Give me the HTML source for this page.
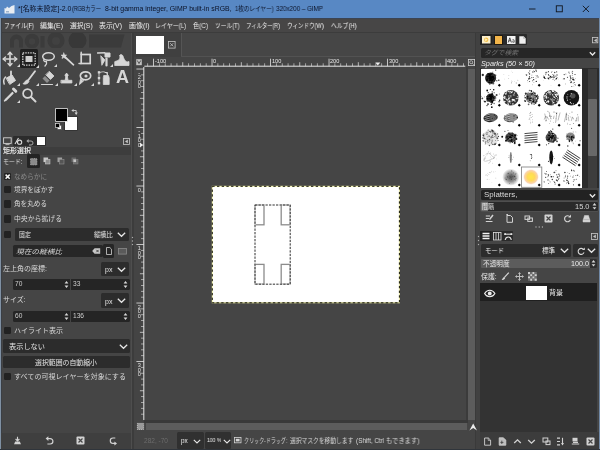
<!DOCTYPE html>
<html lang="ja"><head><meta charset="utf-8"><title>GIMP</title><style>
html,body{margin:0;padding:0;}
body{width:600px;height:450px;overflow:hidden;background:#454545;position:relative;
font-family:"Liberation Sans","Noto Sans CJK JP",sans-serif;font-size:7px;color:#e0e0e0;line-height:1;}
.a{position:absolute;}
.t{position:absolute;white-space:nowrap;will-change:transform;}
svg{overflow:visible;}
</style></head><body>
<div class="a" style="left:0px;top:0px;width:600px;height:17.5px;background:#5888c4;"></div>
<svg class="a" style="left:4px;top:4px;" width="11" height="10" viewBox="0 0 11 10"><path d="M0.5 9.5 L0.5 4 L2 4.5 L3 2.5 L5 4 L7.5 2 L10.5 1 L10.5 9.5 Z" fill="#e8edf3"></path><path d="M2 7 h3 v1.5 h-3z" fill="#9fb3cc"></path></svg>
<div class="t" style="left: 17.6px; top: 5.5px; font-size: 6.6px; line-height: 6.6px; color: rgb(11, 18, 38); transform-origin: 0px 50%; transform: scaleX(1.056);">*[名称未設定]-2.0</div>
<div class="t" style="left: 72.4px; top: 5.5px; font-size: 6.6px; line-height: 6.6px; color: rgb(11, 18, 38); transform-origin: 0px 50%; transform: scaleX(0.8);">(RGBカラー</div>
<div class="t" style="left: 105px; top: 5.5px; font-size: 6.6px; line-height: 6.6px; color: rgb(11, 18, 38); transform-origin: 0px 50%; transform: scaleX(1.045);">8-bit gamma integer, GIMP built-in sRGB,</div>
<div class="t" style="left: 235px; top: 5.5px; font-size: 6.6px; line-height: 6.6px; color: rgb(11, 18, 38); transform-origin: 0px 50%; transform: scaleX(0.853);">1枚のレイヤー)</div>
<div class="t" style="left: 276px; top: 5.5px; font-size: 6.6px; line-height: 6.6px; color: rgb(11, 18, 38); transform-origin: 0px 50%; transform: scaleX(0.95);">320x200 – GIMP</div>
<svg class="a" style="left:520px;top:0px;" width="80" height="17.5" viewBox="0 0 80 17.5"><path d="M9 9 h6.5" stroke="#10141c" stroke-width="0.9" fill="none"></path><rect x="36.3" y="5.8" width="6" height="6" stroke="#10141c" stroke-width="0.9" fill="none"></rect><path d="M62.8 5.8 l6.2 6.2 M69 5.8 l-6.2 6.2" stroke="#10141c" stroke-width="0.9" fill="none"></path></svg>
<div class="a" style="left:0px;top:17.5px;width:600px;height:15px;background:#474646;"></div>
<div class="a" style="left:0px;top:17.5px;width:600px;height:1.5px;background:#3b4454;"></div>
<div class="a" style="left:0px;top:31.8px;width:600px;height:1.2px;background:#3c3c3c;"></div>
<div class="t" style="left: 4px; top: 22.9px; font-size: 6.8px; line-height: 6.8px; color: rgb(236, 236, 236); transform-origin: 0px 50%; transform: scaleX(0.836);">ファイル(F)</div>
<div class="t" style="left: 40px; top: 22.9px; font-size: 6.8px; line-height: 6.8px; color: rgb(236, 236, 236); transform-origin: 0px 50%; transform: scaleX(1.015);">編集(E)</div>
<div class="t" style="left: 70px; top: 22.9px; font-size: 6.8px; line-height: 6.8px; color: rgb(236, 236, 236); transform-origin: 0px 50%; transform: scaleX(0.993);">選択(S)</div>
<div class="t" style="left: 99px; top: 22.9px; font-size: 6.8px; line-height: 6.8px; color: rgb(236, 236, 236); transform-origin: 0px 50%; transform: scaleX(1.015);">表示(V)</div>
<div class="t" style="left: 129px; top: 22.9px; font-size: 6.8px; line-height: 6.8px; color: rgb(236, 236, 236); transform-origin: 0px 50%; transform: scaleX(1.024);">画像(I)</div>
<div class="t" style="left: 155px; top: 22.9px; font-size: 6.8px; line-height: 6.8px; color: rgb(236, 236, 236); transform-origin: 0px 50%; transform: scaleX(0.878);">レイヤー(L)</div>
<div class="t" style="left: 192.5px; top: 22.9px; font-size: 6.8px; line-height: 6.8px; color: rgb(236, 236, 236); transform-origin: 0px 50%; transform: scaleX(0.924);">色(C)</div>
<div class="t" style="left: 215px; top: 22.9px; font-size: 6.8px; line-height: 6.8px; color: rgb(236, 236, 236); transform-origin: 0px 50%; transform: scaleX(0.843);">ツール(T)</div>
<div class="t" style="left: 245.5px; top: 22.9px; font-size: 6.8px; line-height: 6.8px; color: rgb(236, 236, 236); transform-origin: 0px 50%; transform: scaleX(0.785);">フィルター(R)</div>
<div class="t" style="left: 286.5px; top: 22.9px; font-size: 6.8px; line-height: 6.8px; color: rgb(236, 236, 236); transform-origin: 0px 50%; transform: scaleX(0.812);">ウィンドウ(W)</div>
<div class="t" style="left: 330.5px; top: 22.9px; font-size: 6.8px; line-height: 6.8px; color: rgb(236, 236, 236); transform-origin: 0px 50%; transform: scaleX(0.855);">ヘルプ(H)</div>
<div class="a" style="left:0px;top:17.5px;width:1.1px;height:432.5px;background:#7f90a3;"></div>
<div class="a" style="left:1.1px;top:17.5px;width:0.7px;height:432.5px;background:#3a3e44;"></div>
<div class="a" style="left:1px;top:432.7px;width:129.5px;height:16px;background:#3f3f3f;"></div>
<svg class="a" style="left:0px;top:33px;clip-path:inset(0 0 0 0);" width="131" height="15" viewBox="0 0 131 15"><g fill="#3b3b3b"><path d="M10 14.5 V8 a6.5 6.5 0 0 1 13 0 V14.5 H19 V8.5 a2.5 2.5 0 0 0 -5 0 V14.5Z"></path><circle cx="32" cy="8" r="7.3"></circle><rect x="40.5" y="3" width="4" height="11.5"></rect><circle cx="56" cy="7.5" r="8.6"></circle><circle cx="77.5" cy="7.5" r="9" fill="#383838"></circle><path d="M89 1.5 H124.5 L121 14.5 H89Z"></path></g><g fill="#414141"><circle cx="32" cy="8.5" r="3.2"></circle><circle cx="56" cy="8" r="4"></circle></g></svg>
<div class="a" style="left:19.5px;top:49px;width:18px;height:18.5px;background:#1f1f1f;border-radius:1.5px;"></div>
<svg class="a" style="left:2px;top:51px;" width="16" height="16" viewBox="0 0 16 16"><g fill="none" stroke="#d6d6d6" stroke-width="1.2" stroke-linecap="round" stroke-linejoin="round"><path d="M8 1.5 V14.5 M1.5 8 H14.5" stroke-width="1.6"></path><path d="M6 3.5 L8 1.2 L10 3.5 M6 12.5 L8 14.8 L10 12.5 M3.5 6 L1.2 8 L3.5 10 M12.5 6 L14.8 8 L12.5 10" stroke-width="1.4"></path></g></svg>
<svg class="a" style="left:17px;top:64px;" width="3" height="3" viewBox="0 0 3 3"><path d="M3 0 V3 H0Z" fill="#d6d6d6"></path></svg>
<svg class="a" style="left:20.5px;top:51px;" width="16" height="16" viewBox="0 0 16 16"><g fill="none" stroke="#d6d6d6" stroke-width="1.2" stroke-linecap="round" stroke-linejoin="round"><rect x="1.8" y="1.8" width="12.4" height="12.4" stroke-dasharray="1.4 1.1" stroke-linecap="butt" stroke-width="1.3"></rect><rect x="4.5" y="5" width="7" height="6" fill="#cfcfcf" stroke="none"></rect></g></svg>
<svg class="a" style="left:35.5px;top:65px;" width="3" height="3" viewBox="0 0 3 3"><path d="M3 0 V3 H0Z" fill="#d6d6d6"></path></svg>
<svg class="a" style="left:39.5px;top:51px;" width="16" height="16" viewBox="0 0 16 16"><g fill="none" stroke="#d6d6d6" stroke-width="1.2" stroke-linecap="round" stroke-linejoin="round"><ellipse cx="8.5" cy="5.5" rx="5.8" ry="3.8" stroke-width="1.5"></ellipse><path d="M4 8 C3 10 5 11 6.5 10.5 C7 12 6 14 5 15" stroke-width="1.3"></path></g></svg>
<svg class="a" style="left:53.5px;top:64px;" width="3" height="3" viewBox="0 0 3 3"><path d="M3 0 V3 H0Z" fill="#d6d6d6"></path></svg>
<svg class="a" style="left:58.5px;top:51px;" width="16" height="16" viewBox="0 0 16 16"><g fill="none" stroke="#d6d6d6" stroke-width="1.2" stroke-linecap="round" stroke-linejoin="round"><path d="M6 6 L14.5 13.8" stroke-width="1.7"></path><path d="M4.8 2 L5.6 3.9 L7.6 4.1 L6.1 5.5 L6.6 7.5 L4.8 6.5 L3 7.5 L3.5 5.5 L2.1 4.1 L4.1 3.9Z" fill="#d6d6d6" stroke-width="0.6"></path></g></svg>
<svg class="a" style="left:77px;top:51px;" width="16" height="16" viewBox="0 0 16 16"><g fill="none" stroke="#d6d6d6" stroke-width="1.2" stroke-linecap="round" stroke-linejoin="round"><rect x="4.2" y="3.5" width="9" height="9" stroke-width="1.7" stroke-linejoin="miter"></rect><path d="M4.2 1.2 V3.5 M2 12.5 H4.2" stroke-width="1.5"></path></g></svg>
<svg class="a" style="left:95.5px;top:51px;" width="16" height="16" viewBox="0 0 16 16"><g fill="none" stroke="#d6d6d6" stroke-width="1.2" stroke-linecap="round" stroke-linejoin="round"><path d="M1.5 2 H14 V6 H9 V2Z" fill="#d6d6d6" stroke-width="1"></path><path d="M5 5 L9 9 L6 14 Z" fill="#d6d6d6" stroke-width="0.8"></path><path d="M10.5 7.5 V14.5" stroke-width="2.2"></path></g></svg>
<svg class="a" style="left:109.5px;top:64px;" width="3" height="3" viewBox="0 0 3 3"><path d="M3 0 V3 H0Z" fill="#d6d6d6"></path></svg>
<svg class="a" style="left:114px;top:51px;" width="16" height="16" viewBox="0 0 16 16"><g fill="none" stroke="#d6d6d6" stroke-width="1.2" stroke-linecap="round" stroke-linejoin="round"><path d="M1 14.5 H15 V10.5 C12 12 10.5 9 9.5 6.5 C9 4 7 2.5 5.5 4.5 C6.5 6 6 8.5 4 9.5 C3 10 2 10 1 10.5Z" fill="#d6d6d6" stroke-width="0.8"></path></g></svg>
<svg class="a" style="left:2px;top:69.5px;" width="16" height="16" viewBox="0 0 16 16"><g fill="none" stroke="#d6d6d6" stroke-width="1.2" stroke-linecap="round" stroke-linejoin="round"><path d="M4.5 8 L10 5 L13.5 10.5 L8 14.2Z" fill="#d6d6d6" stroke-width="1"></path><path d="M9 1.5 V8" stroke-width="1.8"></path><path d="M3.5 7 C1.5 9 1.5 12 2.2 14" stroke-width="1.5"></path></g></svg>
<svg class="a" style="left:17px;top:82.5px;" width="3" height="3" viewBox="0 0 3 3"><path d="M3 0 V3 H0Z" fill="#d6d6d6"></path></svg>
<svg class="a" style="left:20.5px;top:69.5px;" width="16" height="16" viewBox="0 0 16 16"><g fill="none" stroke="#d6d6d6" stroke-width="1.2" stroke-linecap="round" stroke-linejoin="round"><path d="M14 1.2 L7 10.5" stroke-width="1.9"></path><path d="M6.5 10 C4.5 10 4 12 2 13.8 C4.5 14.8 7.5 13.5 8 11.5Z" fill="#d6d6d6" stroke-width="0.8"></path></g></svg>
<svg class="a" style="left:35.5px;top:82.5px;" width="3" height="3" viewBox="0 0 3 3"><path d="M3 0 V3 H0Z" fill="#d6d6d6"></path></svg>
<svg class="a" style="left:39.5px;top:69.5px;" width="16" height="16" viewBox="0 0 16 16"><g fill="none" stroke="#d6d6d6" stroke-width="1.2" stroke-linecap="round" stroke-linejoin="round"><path d="M9.5 1.5 L14 6 L10.5 9.5 L6 5Z" fill="#d6d6d6" stroke-width="0.8"></path><path d="M5 6 L9.5 10.5 L7 13 L2.5 8.5Z" fill="#8d8d8d" stroke="none"></path><path d="M1.5 14.5 H12.5" stroke-width="1.2"></path></g></svg>
<svg class="a" style="left:54.5px;top:82.5px;" width="3" height="3" viewBox="0 0 3 3"><path d="M3 0 V3 H0Z" fill="#d6d6d6"></path></svg>
<svg class="a" style="left:58.5px;top:69.5px;" width="16" height="16" viewBox="0 0 16 16"><g fill="none" stroke="#d6d6d6" stroke-width="1.2" stroke-linecap="round" stroke-linejoin="round"><path d="M7.6 3.6 a1.6 1.6 0 1 1 -0.01 0Z M6.8 6.6 L6.2 10 H9 L8.4 6.6Z M2.3 10.3 H12.9 V13 H2.3Z" fill="#d6d6d6" stroke-width="0.8"></path></g></svg>
<svg class="a" style="left:73.5px;top:82.5px;" width="3" height="3" viewBox="0 0 3 3"><path d="M3 0 V3 H0Z" fill="#d6d6d6"></path></svg>
<svg class="a" style="left:77px;top:69.5px;" width="16" height="16" viewBox="0 0 16 16"><g fill="none" stroke="#d6d6d6" stroke-width="1.2" stroke-linecap="round" stroke-linejoin="round"><ellipse cx="8.5" cy="5.8" rx="5.2" ry="4" stroke-width="1.7"></ellipse><path d="M3.5 9 L2.5 14.5 L6.5 11Z" fill="#d6d6d6" stroke-width="0.9"></path><circle cx="9" cy="6" r="1.6" fill="#d6d6d6" stroke="none"></circle></g></svg>
<svg class="a" style="left:91px;top:82.5px;" width="3" height="3" viewBox="0 0 3 3"><path d="M3 0 V3 H0Z" fill="#d6d6d6"></path></svg>
<svg class="a" style="left:95.5px;top:69.5px;" width="16" height="16" viewBox="0 0 16 16"><g fill="none" stroke="#d6d6d6" stroke-width="1.2" stroke-linecap="round" stroke-linejoin="round"><path d="M3 2 V14" stroke-width="0.9" stroke-dasharray="1.2 1.2"></path><rect x="1.8" y="1.2" width="2.4" height="2.4" fill="#d6d6d6" stroke="none"></rect><rect x="1.8" y="6.8" width="2.4" height="2.4" fill="#d6d6d6" stroke="none"></rect><rect x="1.8" y="12" width="2.4" height="2.4" fill="#d6d6d6" stroke="none"></rect><path d="M4.2 2.4 C7 1.2 9.5 1.6 10.3 3.2" stroke-width="0.8"></path><path d="M8 5.5 H12.5 L13.2 8 V14.5 H7.3 V8Z" fill="#d6d6d6" stroke-width="0.8"></path><path d="M9.2 2.5 H11.3 V5" stroke-width="1.2"></path></g></svg>
<div class="t" style="left:115.5px;top:68.0px;font-size:18px;line-height:18px;font-weight:bold;color:#d6d6d6;">A</div>
<svg class="a" style="left:2px;top:87px;" width="16" height="16" viewBox="0 0 16 16"><g fill="none" stroke="#d6d6d6" stroke-width="1.2" stroke-linecap="round" stroke-linejoin="round"><path d="M11.5 2 L13.8 4.3" stroke-width="3"></path><path d="M10.5 5.5 L4 12 L2.5 14 L4.5 12.8 L11 6.2" stroke-width="1.4"></path></g></svg>
<svg class="a" style="left:17px;top:100px;" width="3" height="3" viewBox="0 0 3 3"><path d="M3 0 V3 H0Z" fill="#d6d6d6"></path></svg>
<svg class="a" style="left:20.5px;top:87px;" width="16" height="16" viewBox="0 0 16 16"><g fill="none" stroke="#d6d6d6" stroke-width="1.2" stroke-linecap="round" stroke-linejoin="round"><circle cx="6.5" cy="6.5" r="4.4" stroke-width="1.7"></circle><path d="M10 10 L14.5 14.5" stroke-width="2"></path></g></svg>
<div class="a" style="left:64.5px;top:117px;width:12.5px;height:12.5px;background:#ffffff;box-shadow:0 0 0 0.6px #2a2a2a;"></div>
<div class="a" style="left:55.6px;top:108.6px;width:11.8px;height:12.1px;background:#000000;box-shadow:0 0 0 0.8px #dcdcdc;"></div>
<svg class="a" style="left:54.5px;top:123px;" width="7" height="7" viewBox="0 0 7 7"><rect x="2.2" y="2.2" width="4.3" height="4.3" fill="#fff" stroke="#222" stroke-width="0.5"></rect><rect x="0.4" y="0.4" width="4.2" height="4.2" fill="#000" stroke="#ddd" stroke-width="0.7"></rect></svg>
<svg class="a" style="left:70.5px;top:108.5px;" width="7" height="6" viewBox="0 0 7 6"><path d="M1 1.5 H5.2 V5.2" fill="none" stroke="#d0d0d0" stroke-width="0.9"></path><path d="M2.6 0 L0.3 1.5 L2.6 3Z M3.6 3.6 L5.2 6 L6.8 3.6Z" fill="#d0d0d0"></path></svg>
<div class="a" style="left:12.7px;top:135.7px;width:33.3px;height:10px;background:#2c2c2c;border-radius:1px;"></div>
<svg class="a" style="left:3px;top:137px;" width="9" height="8" viewBox="0 0 9 8"><rect x="0.6" y="0.8" width="7.6" height="5.6" fill="none" stroke="#d4d4d4" stroke-width="0.9"></rect><path d="M2.5 7.6 H6.5" stroke="#d4d4d4" stroke-width="0.8"></path></svg>
<svg class="a" style="left:14px;top:137px;" width="9" height="8" viewBox="0 0 9 8"><path d="M1 7 L4.5 1" stroke="#dadada" stroke-width="1.1"></path><circle cx="5.6" cy="5.2" r="2.1" fill="none" stroke="#dadada" stroke-width="1.1"></circle></svg>
<svg class="a" style="left:26px;top:137.5px;" width="8" height="7" viewBox="0 0 8 7"><path d="M1.5 3 H5 a2 2 0 0 1 0 4 H3" fill="none" stroke="#a8a8a8" stroke-width="1"></path><path d="M2.6 1 L0.4 3 L2.6 5Z" fill="#a8a8a8"></path></svg>
<div class="a" style="left:36.6px;top:136.8px;width:8.4px;height:8.5px;background:#ffffff;"></div>
<svg class="a" style="left:123px;top:137.5px;" width="7" height="7" viewBox="0 0 7 7"><rect x="0.4" y="0.4" width="6" height="6" fill="none" stroke="#c8c8c8" stroke-width="0.8"></rect><path d="M4.8 1.6 L2 3.4 L4.8 5.2Z" fill="#c8c8c8"></path></svg>
<div class="a" style="left:1px;top:146.5px;width:130px;height:0.8px;background:#525252;"></div>
<div class="a" style="left:1px;top:147.3px;width:130px;height:7.5px;background:#3d3d3d;"></div>
<div class="t" style="left: 3px; top: 147.3px; font-size: 7px; line-height: 7px; color: rgb(230, 230, 230); font-weight: bold; transform-origin: 0px 50%; transform: scaleX(1);">矩形選択</div>
<div class="t" style="left: 3px; top: 158.7px; font-size: 6.6px; line-height: 6.6px; color: rgb(218, 218, 218); transform-origin: 0px 50%; transform: scaleX(0.902);">モード:</div>
<div class="a" style="left:27px;top:154.2px;width:12.5px;height:13.8px;background:#232323;border-radius:1.5px;"></div>
<svg class="a" style="left:29.5px;top:157.5px;" width="7.5" height="7.5" viewBox="0 0 7.5 7.5"><rect x="0.6" y="0.6" width="6.3" height="6.3" fill="#8a8a8a" stroke="#bdbdbd" stroke-width="0.7" stroke-dasharray="1 0.7"></rect></svg>
<svg class="a" style="left:43px;top:157px;" width="7.5" height="7.5" viewBox="0 0 7.5 7.5"><rect x="0.5" y="0.5" width="4.6" height="4.6" fill="#c9c9c9"></rect><rect x="2.4" y="2.4" width="4.6" height="4.6" fill="#8d8d8d" stroke="#cfcfcf" stroke-width="0.5"></rect></svg>
<svg class="a" style="left:57px;top:157px;" width="7.5" height="7.5" viewBox="0 0 7.5 7.5"><rect x="0.5" y="0.5" width="4.6" height="4.6" fill="#a0a0a0"></rect><rect x="2.4" y="2.4" width="4.6" height="4.6" fill="#555" stroke="#9a9a9a" stroke-width="0.5"></rect></svg>
<svg class="a" style="left:70.5px;top:157px;" width="7.5" height="7.5" viewBox="0 0 7.5 7.5"><rect x="0.5" y="0.5" width="4.6" height="4.6" fill="#6a6a6a"></rect><rect x="2.4" y="2.4" width="4.6" height="4.6" fill="#666" stroke="#888" stroke-width="0.5"></rect><rect x="2.4" y="2.4" width="2.7" height="2.7" fill="#c4c4c4"></rect></svg>
<div class="a" style="left:3.8px;top:173px;width:7.3px;height:7.3px;background:#222222;border-radius:1.2px;"></div>
<svg class="a" style="left:3.8px;top:173px;" width="7.3" height="7.3" viewBox="0 0 7.3 7.3"><path d="M1.6 1.6 L5.7 5.7 M5.7 1.6 L1.6 5.7" stroke="#f2f2f2" stroke-width="1.5" fill="none"></path></svg>
<div class="t" style="left: 14px; top: 173.9px; font-size: 6.6px; line-height: 6.6px; color: rgb(138, 138, 138); transform-origin: 0px 50%; transform: scaleX(1.001);">なめらかに</div>
<div class="a" style="left:3.8px;top:186px;width:7.3px;height:7.3px;background:#222222;border-radius:1.2px;"></div>
<div class="t" style="left: 14px; top: 187px; font-size: 6.6px; line-height: 6.6px; color: rgb(216, 216, 216); transform-origin: 0px 50%; transform: scaleX(1.011);">境界をぼかす</div>
<div class="a" style="left:3.8px;top:200.3px;width:7.3px;height:7.3px;background:#222222;border-radius:1.2px;"></div>
<div class="t" style="left: 14px; top: 201.1px; font-size: 6.6px; line-height: 6.6px; color: rgb(216, 216, 216); transform-origin: 0px 50%; transform: scaleX(1.001);">角を丸める</div>
<div class="a" style="left:3.8px;top:215.3px;width:7.3px;height:7.3px;background:#222222;border-radius:1.2px;"></div>
<div class="t" style="left: 14px; top: 215.9px; font-size: 6.6px; line-height: 6.6px; color: rgb(216, 216, 216); transform-origin: 0px 50%; transform: scaleX(1.04);">中央から拡げる</div>
<div class="a" style="left:3.8px;top:231px;width:7.3px;height:7.3px;background:#222222;border-radius:1.2px;"></div>
<div class="a" style="left:15px;top:227.5px;width:114.3px;height:13.5px;background:#2c2c2c;border-radius:1.5px;"></div>
<div class="t" style="left: 18.5px; top: 231.9px; font-size: 6.6px; line-height: 6.6px; color: rgb(230, 230, 230); transform-origin: 0px 50%; transform: scaleX(0.91);">固定</div>
<div class="t" style="left: 93.5px; top: 231.9px; font-size: 6.6px; line-height: 6.6px; color: rgb(230, 230, 230); transform-origin: 0px 50%; transform: scaleX(0.935);">縦横比</div>
<svg class="a" style="left:117px;top:232px;" width="9" height="5" viewBox="0 0 9 5"><path d="M0.8 0.8 L4.5 4.3 L8.2 0.8" fill="none" stroke="#e8e8e8" stroke-width="1.2"></path></svg>
<div class="a" style="left:13px;top:245.2px;width:89.5px;height:11.6px;background:#272727;border-radius:1.5px;"></div>
<div class="t" style="left: 16px; top: 248.6px; font-size: 6.6px; line-height: 6.6px; color: rgb(218, 218, 218); font-style: italic; transform-origin: 0px 50%; transform: scaleX(1.163);">現在の縦横比</div>
<svg class="a" style="left:92px;top:248px;" width="8.5" height="6" viewBox="0 0 8.5 6"><path d="M2.6 0.3 H8.2 V5.7 H2.6 L0.2 3Z" fill="#c8c8c8"></path><path d="M4.3 1.8 L6.7 4.2 M6.7 1.8 L4.3 4.2" stroke="#2c2c2c" stroke-width="0.8"></path></svg>
<div class="a" style="left:103px;top:244px;width:11px;height:14px;background:#262626;border-radius:1.5px;"></div>
<svg class="a" style="left:105.5px;top:247px;" width="6" height="8" viewBox="0 0 6 8"><path d="M0.5 0.5 H3.8 L5.5 2.2 V7.5 H0.5Z" fill="none" stroke="#d0d0d0" stroke-width="0.8"></path></svg>
<svg class="a" style="left:117.5px;top:247.5px;" width="9" height="7" viewBox="0 0 9 7"><rect x="0.5" y="0.5" width="8" height="5.6" fill="#5a5a5a" stroke="#8a8a8a" stroke-width="0.8"></rect></svg>
<div class="t" style="left: 2.5px; top: 265.6px; font-size: 6.6px; line-height: 6.6px; color: rgb(218, 218, 218); transform-origin: 0px 50%; transform: scaleX(1.063);">左上角の座標:</div>
<div class="a" style="left:100.7px;top:261.6px;width:28.8px;height:14.8px;background:#2c2c2c;border-radius:1.5px;"></div>
<div class="t" style="left:105px;top:265.80px;font-size:7px;line-height:7px;color:#e6e6e6;">px</div>
<svg class="a" style="left:116.8px;top:266.6px;" width="9" height="5" viewBox="0 0 9 5"><path d="M0.8 0.8 L4.5 4.3 L8.2 0.8" fill="none" stroke="#e8e8e8" stroke-width="1.2"></path></svg>
<div class="a" style="left:12.5px;top:278.7px;width:117px;height:11.3px;background:#252525;border-radius:1.5px;"></div>
<div class="a" style="left:70.3px;top:278.7px;width:0.8px;height:11.3px;background:#454545;"></div>
<div class="t" style="left:15px;top:281.40px;font-size:6.6px;line-height:6.6px;color:#cfcfcf;">70</div>
<div class="t" style="left:73px;top:281.40px;font-size:6.6px;line-height:6.6px;color:#cfcfcf;">33</div>
<svg class="a" style="left:63.5px;top:279.9px;" width="5" height="9" viewBox="0 0 5 9"><path d="M0.6 3.4 L2.5 1 L4.4 3.4Z M0.6 5.6 L2.5 8 L4.4 5.6Z" fill="#d8d8d8"></path></svg>
<svg class="a" style="left:123px;top:279.9px;" width="5" height="9" viewBox="0 0 5 9"><path d="M0.6 3.4 L2.5 1 L4.4 3.4Z M0.6 5.6 L2.5 8 L4.4 5.6Z" fill="#d8d8d8"></path></svg>
<div class="t" style="left: 2.5px; top: 296.8px; font-size: 6.6px; line-height: 6.6px; color: rgb(218, 218, 218); transform-origin: 0px 50%; transform: scaleX(1.05);">サイズ:</div>
<div class="a" style="left:100.7px;top:293.3px;width:28.8px;height:14.8px;background:#2c2c2c;border-radius:1.5px;"></div>
<div class="t" style="left:105px;top:297.50px;font-size:7px;line-height:7px;color:#e6e6e6;">px</div>
<svg class="a" style="left:116.8px;top:298.3px;" width="9" height="5" viewBox="0 0 9 5"><path d="M0.8 0.8 L4.5 4.3 L8.2 0.8" fill="none" stroke="#e8e8e8" stroke-width="1.2"></path></svg>
<div class="a" style="left:12.5px;top:310.5px;width:117px;height:11.3px;background:#252525;border-radius:1.5px;"></div>
<div class="a" style="left:70.3px;top:310.5px;width:0.8px;height:11.3px;background:#454545;"></div>
<div class="t" style="left:15px;top:313.20px;font-size:6.6px;line-height:6.6px;color:#cfcfcf;">60</div>
<div class="t" style="left:73px;top:313.20px;font-size:6.6px;line-height:6.6px;color:#cfcfcf;">136</div>
<svg class="a" style="left:63.5px;top:311.7px;" width="5" height="9" viewBox="0 0 5 9"><path d="M0.6 3.4 L2.5 1 L4.4 3.4Z M0.6 5.6 L2.5 8 L4.4 5.6Z" fill="#d8d8d8"></path></svg>
<svg class="a" style="left:123px;top:311.7px;" width="5" height="9" viewBox="0 0 5 9"><path d="M0.6 3.4 L2.5 1 L4.4 3.4Z M0.6 5.6 L2.5 8 L4.4 5.6Z" fill="#d8d8d8"></path></svg>
<div class="a" style="left:3.8px;top:327px;width:7.3px;height:7.3px;background:#222222;border-radius:1.2px;"></div>
<div class="t" style="left: 14px; top: 328px; font-size: 6.6px; line-height: 6.6px; color: rgb(216, 216, 216); transform-origin: 0px 50%; transform: scaleX(1.064);">ハイライト表示</div>
<div class="a" style="left:3px;top:339.3px;width:126.5px;height:13.8px;background:#2c2c2c;border-radius:1.5px;"></div>
<div class="t" style="left: 9px; top: 343.6px; font-size: 6.6px; line-height: 6.6px; color: rgb(230, 230, 230); transform-origin: 0px 50%; transform: scaleX(1.092);">表示しない</div>
<svg class="a" style="left:119px;top:343.8px;" width="9" height="5" viewBox="0 0 9 5"><path d="M0.8 0.8 L4.5 4.3 L8.2 0.8" fill="none" stroke="#e8e8e8" stroke-width="1.2"></path></svg>
<div class="a" style="left:3px;top:356.3px;width:126.5px;height:11.5px;background:#2c2c2c;border-radius:1.5px;"></div>
<div class="t" style="left: 35px; top: 359.5px; font-size: 6.6px; line-height: 6.6px; color: rgb(230, 230, 230); transform-origin: 0px 50%; transform: scaleX(1.045);">選択範囲の自動縮小</div>
<div class="a" style="left:3.8px;top:373px;width:7.3px;height:7.3px;background:#222222;border-radius:1.2px;"></div>
<div class="t" style="left: 14px; top: 374px; font-size: 6.6px; line-height: 6.6px; color: rgb(216, 216, 216); transform-origin: 0px 50%; transform: scaleX(1.07);">すべての可視レイヤーを対象にする</div>
<svg class="a" style="left:12.7px;top:436px;" width="9" height="9" viewBox="0 0 9 9"><path d="M4.5 0.8 V4.5 M2.6 3 L4.5 5 L6.4 3" fill="none" stroke="#d2d2d2" stroke-width="1.1"></path><path d="M1 8.3 L2.2 5.6 H6.8 L8 8.3Z" fill="#d2d2d2"></path></svg>
<svg class="a" style="left:44.5px;top:436px;" width="9" height="9" viewBox="0 0 9 9"><path d="M2.2 2.6 H5.2 a2.6 2.6 0 0 1 0 5.4 H2.4" fill="none" stroke="#d2d2d2" stroke-width="1.2"></path><path d="M3.4 0.3 L0.6 2.6 L3.4 4.9Z" fill="#d2d2d2"></path></svg>
<svg class="a" style="left:76px;top:436px;" width="9" height="9" viewBox="0 0 9 9"><rect x="0.5" y="0.5" width="8" height="8" rx="1" fill="#d2d2d2"></rect><path d="M2.5 2.5 L6.5 6.5 M6.5 2.5 L2.5 6.5" stroke="#454545" stroke-width="1.2"></path></svg>
<svg class="a" style="left:108.5px;top:436px;" width="9" height="9" viewBox="0 0 9 9"><path d="M6.5 7.4 H4 a2.7 2.7 0 0 1 0 -5.4 H6.3" fill="none" stroke="#d2d2d2" stroke-width="1.2"></path><path d="M5.4 5.6 L8 7.6 L5.4 9.4Z" fill="#d2d2d2"></path></svg>
<div class="a" style="left:130.5px;top:33px;width:1px;height:417px;background:#4e4e4e;"></div>
<div class="a" style="left:131.5px;top:33px;width:2.3px;height:417px;background:#3c3c3c;"></div>
<svg class="a" style="left:130.9px;top:235.5px;" width="3" height="10" viewBox="0 0 3 10"><circle cx="1.5" cy="1.5" r="0.7" fill="#aaa"></circle><circle cx="1.5" cy="5" r="0.7" fill="#aaa"></circle><circle cx="1.5" cy="8.5" r="0.7" fill="#aaa"></circle></svg>
<div class="a" style="left:133.8px;top:33px;width:342px;height:24px;background:#464646;"></div>
<div class="a" style="left:133.8px;top:33px;width:47.5px;height:23.5px;background:#404040;"></div>
<div class="a" style="left:181.3px;top:33px;width:0.8px;height:23.5px;background:#555;"></div>
<div class="a" style="left:181.3px;top:56px;width:294px;height:0.8px;background:#525252;"></div>
<div class="a" style="left:135.8px;top:35.7px;width:28.4px;height:18.4px;background:#ffffff;"></div>
<svg class="a" style="left:168px;top:40.5px;" width="7.5" height="7.5" viewBox="0 0 7.5 7.5"><rect x="0.4" y="0.4" width="6.7" height="6.7" fill="none" stroke="#c4c4c4" stroke-width="0.8"></rect><path d="M2.2 2.2 L5.3 5.3 M5.3 2.2 L2.2 5.3" stroke="#c4c4c4" stroke-width="0.8"></path></svg>
<div class="a" style="left:133.8px;top:57px;width:332.2px;height:9.5px;background:#444444;"></div>
<div class="a" style="left:133.8px;top:66.5px;width:10px;height:353.5px;background:#444444;"></div>
<div class="a" style="left:144.3px;top:67px;width:322px;height:353px;background:#454545;"></div>
<svg class="a" style="left:0;top:0" width="600" height="450" viewBox="0 0 600 450"><rect x="147.25" y="63.30" width="0.85" height="2.9" fill="#e4e4e4" opacity="0.7"></rect><rect x="153.10" y="58.70" width="0.85" height="7.5" fill="#e4e4e4" opacity="0.95"></rect><rect x="158.95" y="63.30" width="0.85" height="2.9" fill="#e4e4e4" opacity="0.7"></rect><rect x="164.80" y="63.30" width="0.85" height="2.9" fill="#e4e4e4" opacity="0.7"></rect><rect x="170.65" y="63.30" width="0.85" height="2.9" fill="#e4e4e4" opacity="0.7"></rect><rect x="176.50" y="63.30" width="0.85" height="2.9" fill="#e4e4e4" opacity="0.7"></rect><rect x="182.35" y="62.20" width="0.85" height="4.0" fill="#e4e4e4" opacity="0.85"></rect><rect x="188.20" y="63.30" width="0.85" height="2.9" fill="#e4e4e4" opacity="0.7"></rect><rect x="194.05" y="63.30" width="0.85" height="2.9" fill="#e4e4e4" opacity="0.7"></rect><rect x="199.90" y="63.30" width="0.85" height="2.9" fill="#e4e4e4" opacity="0.7"></rect><rect x="205.75" y="63.30" width="0.85" height="2.9" fill="#e4e4e4" opacity="0.7"></rect><rect x="211.60" y="58.70" width="0.85" height="7.5" fill="#e4e4e4" opacity="0.95"></rect><rect x="217.45" y="63.30" width="0.85" height="2.9" fill="#e4e4e4" opacity="0.7"></rect><rect x="223.30" y="63.30" width="0.85" height="2.9" fill="#e4e4e4" opacity="0.7"></rect><rect x="229.15" y="63.30" width="0.85" height="2.9" fill="#e4e4e4" opacity="0.7"></rect><rect x="235.00" y="63.30" width="0.85" height="2.9" fill="#e4e4e4" opacity="0.7"></rect><rect x="240.85" y="62.20" width="0.85" height="4.0" fill="#e4e4e4" opacity="0.85"></rect><rect x="246.70" y="63.30" width="0.85" height="2.9" fill="#e4e4e4" opacity="0.7"></rect><rect x="252.55" y="63.30" width="0.85" height="2.9" fill="#e4e4e4" opacity="0.7"></rect><rect x="258.40" y="63.30" width="0.85" height="2.9" fill="#e4e4e4" opacity="0.7"></rect><rect x="264.25" y="63.30" width="0.85" height="2.9" fill="#e4e4e4" opacity="0.7"></rect><rect x="270.10" y="58.70" width="0.85" height="7.5" fill="#e4e4e4" opacity="0.95"></rect><rect x="275.95" y="63.30" width="0.85" height="2.9" fill="#e4e4e4" opacity="0.7"></rect><rect x="281.80" y="63.30" width="0.85" height="2.9" fill="#e4e4e4" opacity="0.7"></rect><rect x="287.65" y="63.30" width="0.85" height="2.9" fill="#e4e4e4" opacity="0.7"></rect><rect x="293.50" y="63.30" width="0.85" height="2.9" fill="#e4e4e4" opacity="0.7"></rect><rect x="299.35" y="62.20" width="0.85" height="4.0" fill="#e4e4e4" opacity="0.85"></rect><rect x="305.20" y="63.30" width="0.85" height="2.9" fill="#e4e4e4" opacity="0.7"></rect><rect x="311.05" y="63.30" width="0.85" height="2.9" fill="#e4e4e4" opacity="0.7"></rect><rect x="316.90" y="63.30" width="0.85" height="2.9" fill="#e4e4e4" opacity="0.7"></rect><rect x="322.75" y="63.30" width="0.85" height="2.9" fill="#e4e4e4" opacity="0.7"></rect><rect x="328.60" y="58.70" width="0.85" height="7.5" fill="#e4e4e4" opacity="0.95"></rect><rect x="334.45" y="63.30" width="0.85" height="2.9" fill="#e4e4e4" opacity="0.7"></rect><rect x="340.30" y="63.30" width="0.85" height="2.9" fill="#e4e4e4" opacity="0.7"></rect><rect x="346.15" y="63.30" width="0.85" height="2.9" fill="#e4e4e4" opacity="0.7"></rect><rect x="352.00" y="63.30" width="0.85" height="2.9" fill="#e4e4e4" opacity="0.7"></rect><rect x="357.85" y="62.20" width="0.85" height="4.0" fill="#e4e4e4" opacity="0.85"></rect><rect x="363.70" y="63.30" width="0.85" height="2.9" fill="#e4e4e4" opacity="0.7"></rect><rect x="369.55" y="63.30" width="0.85" height="2.9" fill="#e4e4e4" opacity="0.7"></rect><rect x="375.40" y="63.30" width="0.85" height="2.9" fill="#e4e4e4" opacity="0.7"></rect><rect x="381.25" y="63.30" width="0.85" height="2.9" fill="#e4e4e4" opacity="0.7"></rect><rect x="387.10" y="58.70" width="0.85" height="7.5" fill="#e4e4e4" opacity="0.95"></rect><rect x="392.95" y="63.30" width="0.85" height="2.9" fill="#e4e4e4" opacity="0.7"></rect><rect x="398.80" y="63.30" width="0.85" height="2.9" fill="#e4e4e4" opacity="0.7"></rect><rect x="404.65" y="63.30" width="0.85" height="2.9" fill="#e4e4e4" opacity="0.7"></rect><rect x="410.50" y="63.30" width="0.85" height="2.9" fill="#e4e4e4" opacity="0.7"></rect><rect x="416.35" y="62.20" width="0.85" height="4.0" fill="#e4e4e4" opacity="0.85"></rect><rect x="422.20" y="63.30" width="0.85" height="2.9" fill="#e4e4e4" opacity="0.7"></rect><rect x="428.05" y="63.30" width="0.85" height="2.9" fill="#e4e4e4" opacity="0.7"></rect><rect x="433.90" y="63.30" width="0.85" height="2.9" fill="#e4e4e4" opacity="0.7"></rect><rect x="439.75" y="63.30" width="0.85" height="2.9" fill="#e4e4e4" opacity="0.7"></rect><rect x="445.60" y="58.70" width="0.85" height="7.5" fill="#e4e4e4" opacity="0.95"></rect><rect x="451.45" y="63.30" width="0.85" height="2.9" fill="#e4e4e4" opacity="0.7"></rect><rect x="457.30" y="63.30" width="0.85" height="2.9" fill="#e4e4e4" opacity="0.7"></rect><rect x="463.15" y="63.30" width="0.85" height="2.9" fill="#e4e4e4" opacity="0.7"></rect><rect x="136.40" y="68.60" width="7.5" height="0.85" fill="#e4e4e4" opacity="0.95"></rect><rect x="141.00" y="74.45" width="2.9" height="0.85" fill="#e4e4e4" opacity="0.7"></rect><rect x="141.00" y="80.30" width="2.9" height="0.85" fill="#e4e4e4" opacity="0.7"></rect><rect x="141.00" y="86.15" width="2.9" height="0.85" fill="#e4e4e4" opacity="0.7"></rect><rect x="141.00" y="92.00" width="2.9" height="0.85" fill="#e4e4e4" opacity="0.7"></rect><rect x="139.90" y="97.85" width="4.0" height="0.85" fill="#e4e4e4" opacity="0.85"></rect><rect x="141.00" y="103.70" width="2.9" height="0.85" fill="#e4e4e4" opacity="0.7"></rect><rect x="141.00" y="109.55" width="2.9" height="0.85" fill="#e4e4e4" opacity="0.7"></rect><rect x="141.00" y="115.40" width="2.9" height="0.85" fill="#e4e4e4" opacity="0.7"></rect><rect x="141.00" y="121.25" width="2.9" height="0.85" fill="#e4e4e4" opacity="0.7"></rect><rect x="136.40" y="127.10" width="7.5" height="0.85" fill="#e4e4e4" opacity="0.95"></rect><rect x="141.00" y="132.95" width="2.9" height="0.85" fill="#e4e4e4" opacity="0.7"></rect><rect x="141.00" y="138.80" width="2.9" height="0.85" fill="#e4e4e4" opacity="0.7"></rect><rect x="141.00" y="144.65" width="2.9" height="0.85" fill="#e4e4e4" opacity="0.7"></rect><rect x="141.00" y="150.50" width="2.9" height="0.85" fill="#e4e4e4" opacity="0.7"></rect><rect x="139.90" y="156.35" width="4.0" height="0.85" fill="#e4e4e4" opacity="0.85"></rect><rect x="141.00" y="162.20" width="2.9" height="0.85" fill="#e4e4e4" opacity="0.7"></rect><rect x="141.00" y="168.05" width="2.9" height="0.85" fill="#e4e4e4" opacity="0.7"></rect><rect x="141.00" y="173.90" width="2.9" height="0.85" fill="#e4e4e4" opacity="0.7"></rect><rect x="141.00" y="179.75" width="2.9" height="0.85" fill="#e4e4e4" opacity="0.7"></rect><rect x="136.40" y="185.60" width="7.5" height="0.85" fill="#e4e4e4" opacity="0.95"></rect><rect x="141.00" y="191.45" width="2.9" height="0.85" fill="#e4e4e4" opacity="0.7"></rect><rect x="141.00" y="197.30" width="2.9" height="0.85" fill="#e4e4e4" opacity="0.7"></rect><rect x="141.00" y="203.15" width="2.9" height="0.85" fill="#e4e4e4" opacity="0.7"></rect><rect x="141.00" y="209.00" width="2.9" height="0.85" fill="#e4e4e4" opacity="0.7"></rect><rect x="139.90" y="214.85" width="4.0" height="0.85" fill="#e4e4e4" opacity="0.85"></rect><rect x="141.00" y="220.70" width="2.9" height="0.85" fill="#e4e4e4" opacity="0.7"></rect><rect x="141.00" y="226.55" width="2.9" height="0.85" fill="#e4e4e4" opacity="0.7"></rect><rect x="141.00" y="232.40" width="2.9" height="0.85" fill="#e4e4e4" opacity="0.7"></rect><rect x="141.00" y="238.25" width="2.9" height="0.85" fill="#e4e4e4" opacity="0.7"></rect><rect x="136.40" y="244.10" width="7.5" height="0.85" fill="#e4e4e4" opacity="0.95"></rect><rect x="141.00" y="249.95" width="2.9" height="0.85" fill="#e4e4e4" opacity="0.7"></rect><rect x="141.00" y="255.80" width="2.9" height="0.85" fill="#e4e4e4" opacity="0.7"></rect><rect x="141.00" y="261.65" width="2.9" height="0.85" fill="#e4e4e4" opacity="0.7"></rect><rect x="141.00" y="267.50" width="2.9" height="0.85" fill="#e4e4e4" opacity="0.7"></rect><rect x="139.90" y="273.35" width="4.0" height="0.85" fill="#e4e4e4" opacity="0.85"></rect><rect x="141.00" y="279.20" width="2.9" height="0.85" fill="#e4e4e4" opacity="0.7"></rect><rect x="141.00" y="285.05" width="2.9" height="0.85" fill="#e4e4e4" opacity="0.7"></rect><rect x="141.00" y="290.90" width="2.9" height="0.85" fill="#e4e4e4" opacity="0.7"></rect><rect x="141.00" y="296.75" width="2.9" height="0.85" fill="#e4e4e4" opacity="0.7"></rect><rect x="136.40" y="302.60" width="7.5" height="0.85" fill="#e4e4e4" opacity="0.95"></rect><rect x="141.00" y="308.45" width="2.9" height="0.85" fill="#e4e4e4" opacity="0.7"></rect><rect x="141.00" y="314.30" width="2.9" height="0.85" fill="#e4e4e4" opacity="0.7"></rect><rect x="141.00" y="320.15" width="2.9" height="0.85" fill="#e4e4e4" opacity="0.7"></rect><rect x="141.00" y="326.00" width="2.9" height="0.85" fill="#e4e4e4" opacity="0.7"></rect><rect x="139.90" y="331.85" width="4.0" height="0.85" fill="#e4e4e4" opacity="0.85"></rect><rect x="141.00" y="337.70" width="2.9" height="0.85" fill="#e4e4e4" opacity="0.7"></rect><rect x="141.00" y="343.55" width="2.9" height="0.85" fill="#e4e4e4" opacity="0.7"></rect><rect x="141.00" y="349.40" width="2.9" height="0.85" fill="#e4e4e4" opacity="0.7"></rect><rect x="141.00" y="355.25" width="2.9" height="0.85" fill="#e4e4e4" opacity="0.7"></rect><rect x="136.40" y="361.10" width="7.5" height="0.85" fill="#e4e4e4" opacity="0.95"></rect><rect x="141.00" y="366.95" width="2.9" height="0.85" fill="#e4e4e4" opacity="0.7"></rect><rect x="141.00" y="372.80" width="2.9" height="0.85" fill="#e4e4e4" opacity="0.7"></rect><rect x="141.00" y="378.65" width="2.9" height="0.85" fill="#e4e4e4" opacity="0.7"></rect><rect x="141.00" y="384.50" width="2.9" height="0.85" fill="#e4e4e4" opacity="0.7"></rect><rect x="139.90" y="390.35" width="4.0" height="0.85" fill="#e4e4e4" opacity="0.85"></rect><rect x="141.00" y="396.20" width="2.9" height="0.85" fill="#e4e4e4" opacity="0.7"></rect><rect x="141.00" y="402.05" width="2.9" height="0.85" fill="#e4e4e4" opacity="0.7"></rect><rect x="141.00" y="407.90" width="2.9" height="0.85" fill="#e4e4e4" opacity="0.7"></rect><rect x="141.00" y="413.75" width="2.9" height="0.85" fill="#e4e4e4" opacity="0.7"></rect><rect x="144.3" y="65.7" width="321" height="1" fill="#e6e6e6"></rect><rect x="143.3" y="67" width="1" height="353" fill="#e6e6e6"></rect><path d="M375.3 62.6 H380.3 L377.8 65.6Z" fill="#f0f0f0"></path><path d="M140 142.6 V147.6 L143 145.1Z" fill="#f0f0f0"></path></svg>
<div class="t" style="left:154.8px;top:59.00px;font-size:5.6px;line-height:5.6px;color:#e8e8e8;">-100</div>
<div class="t" style="left:213.3px;top:59.00px;font-size:5.6px;line-height:5.6px;color:#e8e8e8;">0</div>
<div class="t" style="left:271.8px;top:59.00px;font-size:5.6px;line-height:5.6px;color:#e8e8e8;">100</div>
<div class="t" style="left:330.3px;top:59.00px;font-size:5.6px;line-height:5.6px;color:#e8e8e8;">200</div>
<div class="t" style="left:388.8px;top:59.00px;font-size:5.6px;line-height:5.6px;color:#e8e8e8;">300</div>
<div class="t" style="left:447.3px;top:59.00px;font-size:5.6px;line-height:5.6px;color:#e8e8e8;">400</div>
<div class="a" style="left:136.3px;top:70.80px;width:6px;font-size:5.6px;line-height:4.5px;color:#e0e0e0;text-align:center;">-<br>2<br>0<br>0</div>
<div class="a" style="left:136.3px;top:129.30px;width:6px;font-size:5.6px;line-height:4.5px;color:#e0e0e0;text-align:center;">-<br>1<br>0<br>0</div>
<div class="a" style="left:136.3px;top:187.80px;width:6px;font-size:5.6px;line-height:4.5px;color:#e0e0e0;text-align:center;">0</div>
<div class="a" style="left:136.3px;top:246.30px;width:6px;font-size:5.6px;line-height:4.5px;color:#e0e0e0;text-align:center;">1<br>0<br>0</div>
<div class="a" style="left:136.3px;top:304.80px;width:6px;font-size:5.6px;line-height:4.5px;color:#e0e0e0;text-align:center;">2<br>0<br>0</div>
<div class="a" style="left:136.3px;top:363.30px;width:6px;font-size:5.6px;line-height:4.5px;color:#e0e0e0;text-align:center;">3<br>0<br>0</div>
<svg class="a" style="left:136.2px;top:59.4px;" width="6" height="6.4" viewBox="0 0 6 6.4"><rect x="0.2" y="0.2" width="5.6" height="6" fill="#c4c4c4"></rect><path d="M1.3 1.5 L3 4.6 L4.7 1.5" fill="none" stroke="#454545" stroke-width="0.9"></path></svg>
<svg class="a" style="left:468px;top:59px;" width="7" height="7" viewBox="0 0 7 7"><rect x="0.4" y="0.4" width="6.2" height="6.2" fill="none" stroke="#cfcfcf" stroke-width="0.8"></rect><circle cx="3.2" cy="3.2" r="1.5" fill="none" stroke="#cfcfcf" stroke-width="0.7"></circle><path d="M4.3 4.3 L5.6 5.6" stroke="#cfcfcf" stroke-width="0.8"></path></svg>
<div class="a" style="left:468px;top:69px;width:7px;height:351px;background:#5c5c5c;"></div>
<div class="a" style="left:144.3px;top:420px;width:323.7px;height:3.4px;background:#393939;"></div>
<div class="a" style="left:466px;top:67px;width:2px;height:353px;background:#3b3b3b;"></div>
<div class="a" style="left:145.6px;top:423.4px;width:321.4px;height:6.6px;background:#5c5c5c;"></div>
<svg class="a" style="left:136.5px;top:423px;" width="7" height="7" viewBox="0 0 7 7"><rect x="0.4" y="0.4" width="6.2" height="6.2" fill="#9a9a9a" stroke="#cdcdcd" stroke-width="0.8" stroke-dasharray="1.2 0.8"></rect></svg>
<div class="a" style="left:212px;top:186px;width:187px;height:116.3px;background:#ffffff;"></div>
<svg class="a" style="left:211.5px;top:185.5px;" width="188.3" height="117.3" viewBox="0 0 188.3 117.3"><rect x="0.3" y="0.3" width="187.1" height="116.5" fill="none" stroke="#f6f6b0" stroke-width="1"></rect><rect x="0.3" y="0.3" width="187.1" height="116.5" fill="none" stroke="#15150a" stroke-width="1" stroke-dasharray="2.35 2.35"></rect></svg>
<svg class="a" style="left:255.0px;top:204.8px;" width="35.2" height="79.2" viewBox="0 0 35.2 79.2"><g fill="none" stroke="#8c8c8c" stroke-width="1.3"><rect x="0.0" y="0.0" width="9.0" height="19.8"></rect><rect x="26.2" y="0.0" width="9.0" height="19.8"></rect><rect x="0.0" y="59.4" width="9.0" height="19.8"></rect><rect x="26.2" y="59.4" width="9.0" height="19.8"></rect></g><rect x="0" y="0" width="35.2" height="79.2" fill="none" stroke="#ffffff" stroke-width="0.9"></rect><rect x="0" y="0" width="35.2" height="79.2" fill="none" stroke="#161616" stroke-width="0.9" stroke-dasharray="2.3 1.2"></rect></svg>
<div class="a" style="left:133.8px;top:430px;width:346px;height:20px;background:#454545;"></div>
<div class="t" style="left: 144px; top: 437.8px; font-size: 6.4px; line-height: 6.4px; color: rgb(108, 108, 108); transform-origin: 0px 50%; transform: scaleX(1.023);">282, -70</div>
<div class="a" style="left:176.5px;top:432.3px;width:27px;height:16.5px;background:#303030;border-radius:1.5px;"></div>
<div class="t" style="left:181px;top:437.80px;font-size:6.4px;line-height:6.4px;color:#ededed;">px</div>
<svg class="a" style="left:192.7px;top:438.7px;" width="8" height="5" viewBox="0 0 8 5"><path d="M0.8 0.8 L4 4 L7.2 0.8" fill="none" stroke="#e8e8e8" stroke-width="1.1"></path></svg>
<div class="a" style="left:204.7px;top:432.3px;width:26.8px;height:16.5px;background:#303030;border-radius:1.5px;"></div>
<div class="t" style="left: 207px; top: 438.2px; font-size: 5.6px; line-height: 5.6px; color: rgb(237, 237, 237); transform-origin: 0px 50%; transform: scaleX(0.901);">100 %</div>
<svg class="a" style="left:222.7px;top:438.7px;" width="8" height="5" viewBox="0 0 8 5"><path d="M0.8 0.8 L4 4 L7.2 0.8" fill="none" stroke="#e8e8e8" stroke-width="1.1"></path></svg>
<svg class="a" style="left:233.6px;top:437px;" width="7.5" height="6.5" viewBox="0 0 7.5 6.5"><rect x="0.4" y="0.4" width="6.6" height="5.4" fill="none" stroke="#d6d6d6" stroke-width="0.8"></rect><rect x="1.8" y="1.8" width="3.8" height="2.6" fill="#d6d6d6"></rect></svg>
<div class="t" style="left: 244px; top: 437.8px; font-size: 6.4px; line-height: 6.4px; color: rgb(218, 218, 218); transform-origin: 0px 50%; transform: scaleX(0.787);">クリック-ドラッグ:</div>
<div class="t" style="left: 290px; top: 437.8px; font-size: 6.4px; line-height: 6.4px; color: rgb(218, 218, 218); transform-origin: 0px 50%; transform: scaleX(0.9);">選択マスクを移動します</div>
<div class="t" style="left: 356px; top: 437.8px; font-size: 6.4px; line-height: 6.4px; color: rgb(218, 218, 218); transform-origin: 0px 50%; transform: scaleX(0.989);">(Shift, Ctrl もできます)</div>
<div class="a" style="left:475px;top:33px;width:1px;height:417px;background:#3a3a3a;"></div>
<div class="a" style="left:476px;top:33px;width:3.5px;height:417px;background:#414141;"></div>
<svg class="a" style="left:469.3px;top:422.6px;" width="8.4" height="7.8" viewBox="0 0 8.4 7.8"><path d="M4.2 0.4 L8 7.4 L4.2 5 L0.4 7.4Z" fill="#ececec"></path></svg>
<svg class="a" style="left:476.5px;top:234.5px;" width="3" height="12" viewBox="0 0 3 12"><circle cx="1.5" cy="1.5" r="0.7" fill="#aaa"></circle><circle cx="1.5" cy="5.5" r="0.7" fill="#aaa"></circle><circle cx="1.5" cy="9.5" r="0.7" fill="#aaa"></circle></svg>
<div class="a" style="left:479.5px;top:33px;width:120.5px;height:417px;background:#454545;"></div>
<div class="a" style="left:479.8px;top:68.3px;width:2px;height:119.5px;background:#2e2e2e;"></div>
<div class="a" style="left:480px;top:432px;width:120px;height:18px;background:#3c3c3c;"></div>
<div class="a" style="left:480.3px;top:34px;width:46.7px;height:11.3px;background:#2b2b2b;border-radius:1px;"></div>
<div class="a" style="left:480.3px;top:34px;width:11.5px;height:11.3px;background:#222;border-radius:1px;"></div>
<svg class="a" style="left:482px;top:36px;" width="8.5" height="7.5" viewBox="0 0 8.5 7.5"><rect x="0" y="0" width="8.5" height="7.5" fill="#fbeecb"></rect><circle cx="4.2" cy="3.8" r="2.2" fill="#f6c24a"></circle><path d="M3.2 2.2 L5.6 3.8 L3.2 5.4Z" fill="#fbeecb"></path></svg>
<div class="a" style="left:493.6px;top:34.5px;width:9.8px;height:10.5px;background:#1f1a12;border-radius:1px;"></div>
<div class="a" style="left:495px;top:36px;width:7px;height:8px;background:#f3b54a;"></div>
<svg class="a" style="left:506.5px;top:36px;" width="8.5" height="8" viewBox="0 0 8.5 8"><rect x="0" y="0" width="8.5" height="8" fill="#f3f3f3"></rect><path d="M1.2 6.5 L2.8 1.8 L4.4 6.5 M1.8 4.8 H3.8" stroke="#333" stroke-width="0.8" fill="none"></path><path d="M5.3 4 C5.8 3.2 7.2 3.3 7.2 4.4 V6.5 M7.2 5 C5.8 4.8 5.2 5.4 5.4 6 C5.7 6.7 6.8 6.5 7.2 5.8" stroke="#333" stroke-width="0.6" fill="none"></path></svg>
<svg class="a" style="left:519px;top:36px;" width="7" height="8" viewBox="0 0 7 8"><path d="M0.3 0.3 H4.6 L6.7 2.4 V7.7 H0.3Z" fill="#f0f0f0"></path><path d="M4.6 0.3 V2.4 H6.7" fill="none" stroke="#9a9a9a" stroke-width="0.5"></path></svg>
<svg class="a" style="left:591.5px;top:37px;" width="6.5" height="6.5" viewBox="0 0 6.5 6.5"><rect x="0.4" y="0.4" width="5.4" height="5.4" fill="none" stroke="#c8c8c8" stroke-width="0.8"></rect><path d="M4.8 1.6 L2 3.4 L4.8 5.2Z" fill="#c8c8c8"></path></svg>
<div class="a" style="left:480.5px;top:47.5px;width:119.5px;height:10.6px;background:#262626;border-radius:1.5px 0 0 1.5px;"></div>
<div class="t" style="left: 484px; top: 50.3px; font-size: 6.6px; line-height: 6.6px; color: rgb(111, 111, 111); font-style: italic; transform-origin: 0px 50%; transform: scaleX(1.031);">タグで検索</div>
<svg class="a" style="left:588.5px;top:50.5px;" width="7" height="5" viewBox="0 0 7 5"><path d="M0.8 1.2 L3.5 4 L6.2 1.2" fill="none" stroke="#e8e8e8" stroke-width="1.3"></path></svg>
<div class="t" style="left: 481.2px; top: 60.9px; font-size: 6.6px; line-height: 6.6px; color: rgb(236, 236, 236); font-style: italic; transform-origin: 0px 50%; transform: scaleX(1.103);">Sparks (50 × 50)</div>
<div class="a" style="left:481.3px;top:69px;width:100.5px;height:118.5px;background:#ffffff;"></div>
<div class="a" style="left:581.8px;top:68.3px;width:18.2px;height:120px;background:#2b2b2b;"></div>
<div class="a" style="left:588px;top:69px;width:9px;height:118.5px;background:#3d3d3d;"></div>
<div class="a" style="left:588px;top:99px;width:9px;height:57px;background:#686868;border-radius:1px;"></div>
<svg class="a" style="left:0;top:0" width="600" height="450" viewBox="0 0 600 450"><defs><filter id="bl" x="-5%" y="-5%" width="110%" height="110%"><feGaussianBlur stdDeviation="0.35"></feGaussianBlur></filter><radialGradient id="gsoft"><stop offset="0" stop-color="#000" stop-opacity="0.7"></stop><stop offset="0.55" stop-color="#000" stop-opacity="0.4"></stop><stop offset="1" stop-color="#000" stop-opacity="0"></stop></radialGradient><radialGradient id="gsel"><stop offset="0" stop-color="#ffe84a"></stop><stop offset="0.45" stop-color="#ffd95a"></stop><stop offset="0.8" stop-color="#fbd3b0"></stop><stop offset="1" stop-color="#fff" stop-opacity="0"></stop></radialGradient></defs><g fill="#000" filter="url(#bl)"><circle cx="490.6" cy="78.0" r="5.6" opacity="0.8"></circle><circle cx="488.7" cy="76.3" r="0.72" opacity="0.81"></circle><circle cx="489.8" cy="75.7" r="1.00" opacity="0.98"></circle><circle cx="491.3" cy="77.2" r="0.59" opacity="0.71"></circle><circle cx="491.5" cy="82.0" r="0.71" opacity="0.74"></circle><circle cx="490.5" cy="77.1" r="1.01" opacity="0.61"></circle><circle cx="489.0" cy="74.3" r="0.66" opacity="0.54"></circle><circle cx="487.9" cy="80.4" r="0.54" opacity="0.60"></circle><circle cx="492.8" cy="76.9" r="1.14" opacity="0.78"></circle><circle cx="489.9" cy="74.8" r="1.10" opacity="0.92"></circle><circle cx="490.4" cy="77.8" r="0.90" opacity="0.80"></circle><circle cx="492.6" cy="73.1" r="0.52" opacity="0.91"></circle><circle cx="490.3" cy="78.8" r="0.71" opacity="0.92"></circle><circle cx="490.8" cy="78.2" r="0.78" opacity="0.56"></circle><circle cx="490.0" cy="77.0" r="0.83" opacity="0.57"></circle><circle cx="495.7" cy="70.1" r="0.66" opacity="0.81"></circle><circle cx="490.7" cy="79.5" r="0.59" opacity="0.80"></circle><circle cx="493.1" cy="77.3" r="1.16" opacity="0.99"></circle><circle cx="491.4" cy="77.4" r="0.92" opacity="0.51"></circle><circle cx="490.4" cy="78.4" r="0.52" opacity="0.59"></circle><circle cx="492.3" cy="78.6" r="0.52" opacity="0.81"></circle><circle cx="490.9" cy="77.9" r="1.07" opacity="0.56"></circle><circle cx="489.2" cy="82.6" r="1.04" opacity="0.69"></circle><circle cx="489.7" cy="80.4" r="0.55" opacity="0.85"></circle><circle cx="490.4" cy="77.0" r="1.11" opacity="0.83"></circle><circle cx="488.7" cy="76.3" r="0.46" opacity="0.75"></circle><circle cx="491.1" cy="83.4" r="0.78" opacity="0.58"></circle><circle cx="493.8" cy="78.5" r="1.03" opacity="0.82"></circle><circle cx="491.4" cy="77.8" r="1.08" opacity="0.70"></circle><circle cx="491.3" cy="74.0" r="1.18" opacity="0.75"></circle><circle cx="490.1" cy="78.6" r="0.86" opacity="0.73"></circle><circle cx="487.9" cy="74.1" r="1.02" opacity="0.54"></circle><circle cx="486.9" cy="79.7" r="0.97" opacity="0.67"></circle><circle cx="492.9" cy="71.9" r="0.48" opacity="0.66"></circle><circle cx="489.0" cy="78.4" r="1.09" opacity="0.54"></circle><circle cx="490.7" cy="80.0" r="0.74" opacity="0.80"></circle><circle cx="490.8" cy="78.6" r="0.92" opacity="0.57"></circle><circle cx="489.8" cy="73.8" r="0.48" opacity="0.87"></circle><circle cx="492.4" cy="79.9" r="0.70" opacity="0.65"></circle><circle cx="490.6" cy="78.0" r="0.99" opacity="0.95"></circle><circle cx="491.9" cy="80.0" r="0.97" opacity="0.89"></circle><circle cx="491.4" cy="82.6" r="0.87" opacity="0.77"></circle><circle cx="489.5" cy="82.4" r="0.67" opacity="0.55"></circle><circle cx="493.0" cy="77.0" r="0.92" opacity="0.60"></circle><circle cx="488.4" cy="73.7" r="0.80" opacity="0.55"></circle><circle cx="495.4" cy="75.3" r="1.02" opacity="0.51"></circle><circle cx="490.7" cy="78.0" r="1.00" opacity="0.71"></circle><circle cx="487.3" cy="78.5" r="0.73" opacity="0.73"></circle><circle cx="496.8" cy="80.8" r="0.68" opacity="0.71"></circle><circle cx="487.0" cy="76.7" r="0.85" opacity="0.97"></circle><circle cx="493.2" cy="83.5" r="1.11" opacity="0.66"></circle><circle cx="498.8" cy="80.2" r="0.66" opacity="0.98"></circle><circle cx="490.3" cy="77.2" r="1.05" opacity="0.91"></circle><circle cx="490.3" cy="77.7" r="0.88" opacity="0.87"></circle><circle cx="489.5" cy="76.4" r="0.93" opacity="0.56"></circle><circle cx="482.8" cy="75.0" r="1.16" opacity="0.82"></circle><circle cx="492.2" cy="80.3" r="0.60" opacity="0.92"></circle><circle cx="493.4" cy="77.9" r="0.60" opacity="0.77"></circle><circle cx="489.8" cy="84.1" r="0.81" opacity="0.58"></circle><circle cx="494.4" cy="80.5" r="0.67" opacity="0.57"></circle><circle cx="490.5" cy="77.4" r="0.95" opacity="0.83"></circle><circle cx="490.7" cy="78.0" r="1.14" opacity="0.63"></circle><circle cx="493.2" cy="79.5" r="0.68" opacity="0.93"></circle><circle cx="487.9" cy="76.6" r="1.05" opacity="0.67"></circle><circle cx="490.0" cy="78.6" r="1.06" opacity="0.63"></circle><circle cx="490.8" cy="78.1" r="0.61" opacity="0.98"></circle><circle cx="489.8" cy="80.2" r="0.73" opacity="0.90"></circle><circle cx="487.1" cy="80.0" r="0.95" opacity="0.78"></circle><circle cx="492.4" cy="80.6" r="0.87" opacity="0.65"></circle><circle cx="492.1" cy="80.0" r="0.73" opacity="0.67"></circle><circle cx="490.2" cy="80.1" r="0.90" opacity="0.53"></circle><circle cx="490.9" cy="77.3" r="0.94" opacity="0.78"></circle><circle cx="489.6" cy="78.2" r="1.05" opacity="0.76"></circle><circle cx="490.0" cy="78.0" r="0.67" opacity="0.89"></circle><circle cx="488.1" cy="75.3" r="0.45" opacity="0.72"></circle><circle cx="490.6" cy="77.4" r="0.47" opacity="0.59"></circle><circle cx="490.0" cy="80.0" r="0.83" opacity="0.78"></circle><circle cx="490.8" cy="78.4" r="0.92" opacity="0.72"></circle><circle cx="492.0" cy="76.5" r="0.93" opacity="0.81"></circle><circle cx="490.6" cy="78.0" r="0.98" opacity="0.64"></circle><circle cx="490.5" cy="78.1" r="1.11" opacity="0.70"></circle><path d="M497.8 85.3 L499.3 83.8 L500.8 85.3 L499.3 86.8Z"></path><circle cx="511.4" cy="80.9" r="0.39" opacity="0.34"></circle><circle cx="516.0" cy="82.9" r="0.33" opacity="0.57"></circle><circle cx="511.6" cy="82.5" r="0.44" opacity="0.39"></circle><circle cx="504.8" cy="79.1" r="0.27" opacity="0.41"></circle><circle cx="514.7" cy="81.8" r="0.28" opacity="0.46"></circle><circle cx="503.9" cy="74.6" r="0.32" opacity="0.38"></circle><circle cx="516.3" cy="83.0" r="0.39" opacity="0.59"></circle><circle cx="508.7" cy="78.4" r="0.40" opacity="0.45"></circle><circle cx="508.9" cy="75.4" r="0.37" opacity="0.38"></circle><circle cx="511.8" cy="71.1" r="0.26" opacity="0.39"></circle><circle cx="511.3" cy="83.2" r="0.36" opacity="0.38"></circle><circle cx="512.1" cy="81.6" r="0.43" opacity="0.33"></circle><circle cx="517.9" cy="80.2" r="0.37" opacity="0.59"></circle><circle cx="512.4" cy="72.2" r="0.26" opacity="0.57"></circle><path d="M517.8 85.3 L519.2 83.8 L520.8 85.3 L519.2 86.8Z"></path><circle cx="534.6" cy="71.6" r="0.56" opacity="0.85"></circle><circle cx="538.5" cy="77.0" r="0.48" opacity="0.80"></circle><circle cx="533.7" cy="79.7" r="0.59" opacity="0.96"></circle><circle cx="536.4" cy="71.1" r="0.54" opacity="0.87"></circle><circle cx="529.6" cy="73.9" r="0.58" opacity="0.98"></circle><circle cx="529.5" cy="76.8" r="0.60" opacity="0.97"></circle><circle cx="535.9" cy="70.1" r="0.69" opacity="0.77"></circle><circle cx="533.9" cy="82.3" r="0.39" opacity="0.71"></circle><circle cx="533.5" cy="77.4" r="0.47" opacity="0.95"></circle><circle cx="529.9" cy="70.4" r="0.38" opacity="0.99"></circle><circle cx="530.3" cy="78.5" r="0.35" opacity="0.61"></circle><circle cx="531.4" cy="75.1" r="0.35" opacity="0.69"></circle><circle cx="532.5" cy="80.8" r="0.54" opacity="0.64"></circle><circle cx="536.5" cy="81.3" r="0.59" opacity="0.87"></circle><circle cx="526.6" cy="74.9" r="0.69" opacity="0.70"></circle><circle cx="529.6" cy="78.3" r="0.65" opacity="0.78"></circle><circle cx="529.1" cy="72.9" r="0.40" opacity="0.64"></circle><circle cx="536.0" cy="78.1" r="0.35" opacity="1.00"></circle><circle cx="528.4" cy="72.8" r="0.44" opacity="0.79"></circle><circle cx="537.1" cy="75.9" r="0.57" opacity="0.89"></circle><circle cx="529.7" cy="71.2" r="0.37" opacity="0.84"></circle><circle cx="528.7" cy="78.8" r="0.34" opacity="0.94"></circle><circle cx="531.8" cy="77.6" r="0.63" opacity="0.67"></circle><circle cx="528.8" cy="78.3" r="0.51" opacity="0.67"></circle><circle cx="533.5" cy="70.8" r="0.36" opacity="0.83"></circle><circle cx="529.6" cy="81.4" r="0.52" opacity="0.72"></circle><circle cx="535.6" cy="81.4" r="0.41" opacity="0.69"></circle><circle cx="528.9" cy="79.1" r="0.54" opacity="0.96"></circle><circle cx="532.9" cy="72.0" r="0.63" opacity="0.80"></circle><circle cx="526.5" cy="75.2" r="0.38" opacity="0.90"></circle><circle cx="529.1" cy="74.1" r="0.26" opacity="0.59"></circle><circle cx="527.4" cy="80.5" r="0.38" opacity="0.75"></circle><circle cx="535.8" cy="75.5" r="0.31" opacity="0.65"></circle><circle cx="527.9" cy="82.0" r="0.36" opacity="0.46"></circle><circle cx="529.6" cy="77.0" r="0.32" opacity="0.70"></circle><circle cx="525.7" cy="74.8" r="0.38" opacity="0.53"></circle><circle cx="537.4" cy="77.7" r="0.39" opacity="0.52"></circle><circle cx="532.4" cy="84.8" r="0.33" opacity="0.70"></circle><circle cx="529.1" cy="81.4" r="0.25" opacity="0.72"></circle><circle cx="532.8" cy="74.9" r="0.24" opacity="0.55"></circle><path d="M537.7 85.3 L539.2 83.8 L540.7 85.3 L539.2 86.8Z"></path><circle cx="554.2" cy="77.1" r="0.33" opacity="0.99"></circle><circle cx="544.2" cy="76.9" r="0.69" opacity="0.81"></circle><circle cx="557.0" cy="74.9" r="0.73" opacity="0.67"></circle><circle cx="552.7" cy="74.6" r="0.42" opacity="0.89"></circle><circle cx="557.2" cy="77.7" r="0.49" opacity="0.78"></circle><circle cx="556.0" cy="76.8" r="0.49" opacity="0.61"></circle><circle cx="550.1" cy="78.3" r="0.38" opacity="0.84"></circle><circle cx="556.0" cy="76.3" r="0.32" opacity="0.66"></circle><circle cx="555.3" cy="75.9" r="0.36" opacity="0.97"></circle><circle cx="553.8" cy="75.6" r="0.55" opacity="0.91"></circle><circle cx="554.7" cy="72.4" r="0.77" opacity="0.69"></circle><circle cx="545.0" cy="78.4" r="0.65" opacity="0.98"></circle><circle cx="548.4" cy="71.7" r="0.60" opacity="0.75"></circle><circle cx="550.7" cy="76.4" r="0.75" opacity="0.92"></circle><circle cx="543.4" cy="75.9" r="0.45" opacity="0.87"></circle><circle cx="546.0" cy="72.7" r="0.78" opacity="0.63"></circle><circle cx="556.4" cy="78.4" r="0.64" opacity="0.87"></circle><circle cx="548.8" cy="75.3" r="0.54" opacity="0.82"></circle><circle cx="556.7" cy="71.9" r="0.53" opacity="0.62"></circle><circle cx="549.1" cy="75.5" r="0.31" opacity="0.97"></circle><circle cx="546.9" cy="72.6" r="0.45" opacity="0.94"></circle><circle cx="551.7" cy="77.6" r="0.50" opacity="0.91"></circle><circle cx="548.4" cy="74.4" r="0.50" opacity="0.83"></circle><circle cx="553.9" cy="74.4" r="0.33" opacity="0.90"></circle><circle cx="553.0" cy="77.0" r="0.66" opacity="0.89"></circle><circle cx="548.5" cy="78.4" r="0.73" opacity="0.86"></circle><circle cx="554.3" cy="77.0" r="0.55" opacity="0.89"></circle><circle cx="547.8" cy="77.9" r="0.48" opacity="0.75"></circle><circle cx="545.6" cy="74.8" r="0.44" opacity="0.81"></circle><circle cx="553.0" cy="79.6" r="0.49" opacity="0.74"></circle><circle cx="553.6" cy="77.9" r="0.47" opacity="0.81"></circle><circle cx="551.5" cy="72.5" r="0.35" opacity="0.66"></circle><circle cx="548.9" cy="77.4" r="0.41" opacity="0.62"></circle><circle cx="548.9" cy="79.2" r="0.42" opacity="0.74"></circle><circle cx="554.7" cy="80.2" r="0.36" opacity="0.86"></circle><circle cx="544.3" cy="77.5" r="0.79" opacity="0.94"></circle><circle cx="551.7" cy="72.0" r="0.40" opacity="0.92"></circle><circle cx="556.1" cy="78.9" r="0.44" opacity="0.87"></circle><circle cx="550.0" cy="77.2" r="0.70" opacity="0.80"></circle><circle cx="555.8" cy="79.2" r="0.39" opacity="0.90"></circle><circle cx="556.3" cy="79.2" r="0.39" opacity="0.46"></circle><circle cx="556.3" cy="71.3" r="0.36" opacity="0.64"></circle><circle cx="552.5" cy="71.6" r="0.37" opacity="0.49"></circle><circle cx="546.1" cy="71.7" r="0.34" opacity="0.42"></circle><circle cx="545.1" cy="73.0" r="0.24" opacity="0.74"></circle><circle cx="546.6" cy="78.5" r="0.26" opacity="0.45"></circle><circle cx="543.7" cy="80.3" r="0.23" opacity="0.40"></circle><circle cx="551.0" cy="85.8" r="0.22" opacity="0.43"></circle><circle cx="558.4" cy="79.0" r="0.33" opacity="0.43"></circle><circle cx="546.7" cy="74.2" r="0.24" opacity="0.69"></circle><path d="M557.6 85.3 L559.1 83.8 L560.6 85.3 L559.1 86.8Z"></path><circle cx="570.7" cy="79.7" r="0.39" opacity="0.84"></circle><circle cx="572.9" cy="77.8" r="0.54" opacity="0.88"></circle><circle cx="569.2" cy="73.4" r="0.36" opacity="0.92"></circle><circle cx="564.2" cy="78.8" r="0.75" opacity="0.73"></circle><circle cx="573.9" cy="79.9" r="0.71" opacity="0.83"></circle><circle cx="575.7" cy="78.6" r="0.33" opacity="0.61"></circle><circle cx="572.4" cy="79.8" r="0.34" opacity="0.95"></circle><circle cx="573.3" cy="79.5" r="0.64" opacity="0.90"></circle><circle cx="572.6" cy="79.2" r="0.53" opacity="0.69"></circle><circle cx="570.9" cy="82.5" r="0.66" opacity="0.75"></circle><circle cx="573.0" cy="78.6" r="0.40" opacity="0.76"></circle><circle cx="568.9" cy="72.2" r="0.58" opacity="0.65"></circle><circle cx="575.0" cy="84.5" r="0.46" opacity="0.89"></circle><circle cx="567.5" cy="77.3" r="0.63" opacity="0.68"></circle><circle cx="570.9" cy="78.3" r="0.71" opacity="0.82"></circle><circle cx="575.0" cy="74.5" r="0.60" opacity="0.83"></circle><circle cx="572.1" cy="72.0" r="0.45" opacity="0.96"></circle><circle cx="572.6" cy="71.2" r="0.56" opacity="0.60"></circle><circle cx="565.6" cy="83.9" r="0.35" opacity="0.78"></circle><circle cx="570.7" cy="80.7" r="0.41" opacity="0.65"></circle><circle cx="573.2" cy="83.0" r="0.48" opacity="0.73"></circle><circle cx="570.2" cy="75.9" r="0.71" opacity="0.74"></circle><circle cx="571.8" cy="86.4" r="0.51" opacity="0.76"></circle><circle cx="569.8" cy="80.2" r="0.41" opacity="0.72"></circle><circle cx="572.4" cy="73.5" r="0.49" opacity="0.98"></circle><circle cx="575.6" cy="85.2" r="0.36" opacity="0.85"></circle><circle cx="571.3" cy="81.9" r="0.65" opacity="0.89"></circle><circle cx="570.5" cy="77.1" r="0.57" opacity="0.86"></circle><circle cx="573.9" cy="86.0" r="0.33" opacity="0.82"></circle><circle cx="563.2" cy="78.9" r="0.44" opacity="0.74"></circle><circle cx="574.4" cy="82.5" r="0.60" opacity="0.63"></circle><circle cx="565.9" cy="74.0" r="0.45" opacity="0.74"></circle><circle cx="564.2" cy="74.6" r="0.61" opacity="0.80"></circle><circle cx="572.2" cy="75.3" r="0.46" opacity="0.71"></circle><path d="M577.6 85.3 L579.1 83.8 L580.6 85.3 L579.1 86.8Z"></path><circle cx="490.6" cy="97.8" r="4.4" opacity="0.7"></circle><circle cx="490.9" cy="97.6" r="0.93" opacity="0.93"></circle><circle cx="488.5" cy="99.8" r="0.89" opacity="0.59"></circle><circle cx="489.9" cy="100.8" r="0.67" opacity="0.60"></circle><circle cx="494.6" cy="96.5" r="0.41" opacity="0.86"></circle><circle cx="490.7" cy="102.3" r="0.67" opacity="0.60"></circle><circle cx="489.2" cy="94.9" r="0.63" opacity="0.89"></circle><circle cx="496.6" cy="94.9" r="1.00" opacity="0.76"></circle><circle cx="494.3" cy="100.2" r="0.46" opacity="0.96"></circle><circle cx="491.8" cy="107.2" r="0.88" opacity="0.95"></circle><circle cx="488.8" cy="97.8" r="0.43" opacity="0.89"></circle><circle cx="490.6" cy="97.8" r="0.74" opacity="0.66"></circle><circle cx="491.2" cy="94.9" r="0.87" opacity="0.87"></circle><circle cx="491.8" cy="103.1" r="0.98" opacity="0.51"></circle><circle cx="488.2" cy="92.6" r="0.69" opacity="0.76"></circle><circle cx="491.3" cy="95.0" r="0.62" opacity="0.66"></circle><circle cx="482.3" cy="98.4" r="0.90" opacity="0.70"></circle><circle cx="492.2" cy="94.3" r="0.65" opacity="0.53"></circle><circle cx="488.0" cy="104.1" r="0.95" opacity="0.83"></circle><circle cx="490.8" cy="98.8" r="0.99" opacity="0.89"></circle><circle cx="489.8" cy="96.1" r="0.53" opacity="0.83"></circle><circle cx="490.9" cy="99.2" r="0.90" opacity="0.93"></circle><circle cx="486.6" cy="100.0" r="0.45" opacity="0.97"></circle><circle cx="490.7" cy="97.8" r="0.94" opacity="0.78"></circle><circle cx="491.8" cy="96.5" r="0.84" opacity="0.98"></circle><circle cx="493.3" cy="100.3" r="0.90" opacity="0.70"></circle><circle cx="484.3" cy="96.9" r="0.41" opacity="0.73"></circle><circle cx="490.7" cy="97.8" r="0.55" opacity="0.90"></circle><circle cx="486.5" cy="96.5" r="0.47" opacity="0.83"></circle><circle cx="487.4" cy="98.5" r="0.97" opacity="0.82"></circle><circle cx="491.1" cy="97.7" r="0.82" opacity="0.72"></circle><circle cx="492.1" cy="93.4" r="0.75" opacity="0.94"></circle><circle cx="485.0" cy="101.6" r="0.95" opacity="0.95"></circle><circle cx="495.6" cy="97.9" r="0.75" opacity="0.77"></circle><circle cx="494.1" cy="92.8" r="0.50" opacity="0.97"></circle><circle cx="490.1" cy="97.9" r="0.48" opacity="0.81"></circle><circle cx="487.5" cy="101.0" r="0.97" opacity="0.51"></circle><circle cx="495.3" cy="96.6" r="0.90" opacity="0.55"></circle><circle cx="492.4" cy="96.5" r="0.84" opacity="0.81"></circle><circle cx="490.2" cy="95.2" r="0.97" opacity="0.73"></circle><circle cx="493.0" cy="97.8" r="0.41" opacity="0.52"></circle><circle cx="491.1" cy="99.9" r="0.67" opacity="0.54"></circle><circle cx="491.0" cy="98.0" r="0.77" opacity="0.99"></circle><circle cx="492.0" cy="97.8" r="0.82" opacity="0.72"></circle><circle cx="499.1" cy="101.6" r="0.96" opacity="0.51"></circle><circle cx="489.6" cy="98.6" r="0.67" opacity="0.85"></circle><circle cx="490.7" cy="96.5" r="0.69" opacity="1.00"></circle><circle cx="492.4" cy="102.4" r="0.81" opacity="0.78"></circle><circle cx="488.0" cy="98.5" r="0.92" opacity="0.80"></circle><circle cx="490.8" cy="96.9" r="0.67" opacity="0.98"></circle><circle cx="491.7" cy="100.7" r="0.77" opacity="0.72"></circle><circle cx="495.2" cy="100.0" r="0.59" opacity="0.81"></circle><circle cx="494.0" cy="98.4" r="0.69" opacity="0.93"></circle><circle cx="494.1" cy="103.5" r="0.69" opacity="0.66"></circle><circle cx="491.7" cy="101.8" r="1.00" opacity="0.70"></circle><circle cx="492.4" cy="101.6" r="0.78" opacity="0.93"></circle><circle cx="490.3" cy="89.6" r="0.52" opacity="0.95"></circle><circle cx="493.7" cy="89.8" r="0.74" opacity="0.99"></circle><circle cx="499.7" cy="100.2" r="0.69" opacity="0.98"></circle><circle cx="487.2" cy="90.5" r="0.88" opacity="0.98"></circle><circle cx="499.3" cy="94.1" r="0.48" opacity="0.80"></circle><circle cx="490.6" cy="98.0" r="0.41" opacity="0.63"></circle><circle cx="490.1" cy="96.9" r="0.65" opacity="0.65"></circle><circle cx="488.0" cy="96.0" r="0.76" opacity="0.73"></circle><circle cx="493.6" cy="97.3" r="0.86" opacity="0.86"></circle><circle cx="492.2" cy="96.0" r="0.62" opacity="0.79"></circle><circle cx="487.4" cy="96.3" r="0.66" opacity="0.55"></circle><circle cx="489.3" cy="98.2" r="0.48" opacity="0.55"></circle><circle cx="491.3" cy="104.4" r="0.70" opacity="0.86"></circle><circle cx="490.0" cy="96.3" r="0.94" opacity="0.96"></circle><circle cx="492.2" cy="100.2" r="0.45" opacity="0.56"></circle><circle cx="491.2" cy="97.8" r="0.84" opacity="0.87"></circle><circle cx="492.0" cy="94.9" r="0.93" opacity="0.72"></circle><circle cx="490.6" cy="97.8" r="0.77" opacity="0.79"></circle><circle cx="490.2" cy="100.1" r="0.96" opacity="0.54"></circle><circle cx="487.4" cy="99.0" r="0.54" opacity="0.93"></circle><circle cx="489.3" cy="95.1" r="0.56" opacity="0.58"></circle><circle cx="489.9" cy="99.1" r="0.78" opacity="0.67"></circle><circle cx="490.7" cy="95.3" r="0.85" opacity="0.64"></circle><circle cx="492.2" cy="91.8" r="0.64" opacity="0.86"></circle><circle cx="490.9" cy="98.0" r="0.75" opacity="0.56"></circle><circle cx="488.7" cy="96.6" r="0.58" opacity="0.54"></circle><circle cx="492.1" cy="94.8" r="0.69" opacity="0.74"></circle><circle cx="481.3" cy="96.3" r="0.48" opacity="0.59"></circle><circle cx="484.0" cy="101.0" r="0.52" opacity="0.72"></circle><circle cx="491.8" cy="98.8" r="0.79" opacity="0.84"></circle><circle cx="490.3" cy="98.0" r="0.66" opacity="0.76"></circle><circle cx="490.3" cy="96.5" r="0.71" opacity="0.97"></circle><circle cx="490.7" cy="97.6" r="0.60" opacity="0.84"></circle><circle cx="487.0" cy="105.6" r="0.61" opacity="0.96"></circle><circle cx="489.1" cy="96.5" r="0.92" opacity="0.60"></circle><path d="M497.8 105.2 L499.3 103.8 L500.8 105.2 L499.3 106.8Z"></path><circle cx="510.8" cy="97.8" r="7.8" opacity="0.8"></circle><g fill="#fff"><circle cx="504.8" cy="96.2" r="0.55" opacity="0.83"></circle><circle cx="509.9" cy="102.3" r="0.50" opacity="1.00"></circle><circle cx="516.2" cy="98.5" r="0.57" opacity="0.85"></circle><circle cx="513.3" cy="95.1" r="0.52" opacity="0.85"></circle><circle cx="507.0" cy="99.7" r="0.74" opacity="0.90"></circle><circle cx="510.0" cy="92.9" r="0.59" opacity="0.93"></circle><circle cx="514.8" cy="95.2" r="0.41" opacity="0.82"></circle><circle cx="510.1" cy="91.5" r="0.82" opacity="0.91"></circle><circle cx="513.5" cy="100.2" r="0.64" opacity="0.86"></circle><circle cx="512.7" cy="103.9" r="0.60" opacity="0.81"></circle><circle cx="508.3" cy="104.2" r="0.79" opacity="0.91"></circle><circle cx="515.0" cy="101.2" r="0.63" opacity="0.86"></circle><circle cx="509.9" cy="101.5" r="0.43" opacity="0.96"></circle><circle cx="507.9" cy="100.8" r="0.58" opacity="0.95"></circle><circle cx="510.9" cy="95.9" r="0.57" opacity="0.96"></circle><circle cx="506.5" cy="91.9" r="0.62" opacity="0.98"></circle><circle cx="506.2" cy="99.1" r="0.67" opacity="0.88"></circle><circle cx="504.4" cy="97.0" r="0.62" opacity="0.95"></circle><circle cx="504.6" cy="98.4" r="0.58" opacity="0.88"></circle><circle cx="509.2" cy="98.0" r="0.64" opacity="0.98"></circle><circle cx="514.2" cy="100.2" r="0.57" opacity="0.94"></circle><circle cx="513.1" cy="103.9" r="0.53" opacity="0.89"></circle><circle cx="505.3" cy="97.9" r="0.48" opacity="0.95"></circle><circle cx="514.1" cy="100.1" r="0.52" opacity="0.94"></circle><circle cx="504.9" cy="101.6" r="0.67" opacity="0.81"></circle><circle cx="510.9" cy="96.9" r="0.48" opacity="0.97"></circle><circle cx="513.7" cy="99.7" r="0.62" opacity="0.80"></circle><circle cx="508.9" cy="95.8" r="0.51" opacity="0.94"></circle><circle cx="513.6" cy="99.4" r="0.50" opacity="0.97"></circle><circle cx="503.9" cy="97.7" r="0.74" opacity="0.90"></circle><circle cx="504.8" cy="101.5" r="0.72" opacity="0.91"></circle><circle cx="508.5" cy="101.7" r="0.50" opacity="0.97"></circle><circle cx="507.9" cy="103.0" r="0.59" opacity="0.92"></circle><circle cx="512.4" cy="99.6" r="0.80" opacity="0.84"></circle><circle cx="511.7" cy="92.6" r="0.73" opacity="0.97"></circle><circle cx="509.5" cy="101.3" r="0.68" opacity="0.91"></circle><circle cx="505.8" cy="93.9" r="0.78" opacity="0.91"></circle><circle cx="508.8" cy="96.7" r="0.49" opacity="0.80"></circle><circle cx="512.1" cy="101.0" r="0.60" opacity="0.97"></circle><circle cx="514.7" cy="99.8" r="0.47" opacity="0.81"></circle><circle cx="512.1" cy="91.4" r="0.56" opacity="0.99"></circle><circle cx="509.8" cy="101.4" r="0.62" opacity="0.95"></circle><circle cx="509.8" cy="100.7" r="0.52" opacity="0.96"></circle><circle cx="508.7" cy="99.1" r="0.74" opacity="0.99"></circle><circle cx="514.3" cy="93.3" r="0.56" opacity="0.84"></circle><circle cx="510.7" cy="103.7" r="0.41" opacity="0.89"></circle><circle cx="508.9" cy="98.2" r="0.49" opacity="0.91"></circle><circle cx="517.3" cy="96.5" r="0.50" opacity="0.86"></circle><circle cx="514.8" cy="92.2" r="0.49" opacity="0.85"></circle><circle cx="504.9" cy="96.9" r="0.71" opacity="0.87"></circle><circle cx="512.6" cy="99.7" r="0.70" opacity="0.90"></circle><circle cx="506.7" cy="93.6" r="0.44" opacity="0.99"></circle><circle cx="514.0" cy="94.7" r="0.43" opacity="0.92"></circle><circle cx="508.3" cy="91.6" r="0.75" opacity="0.82"></circle><circle cx="512.6" cy="100.0" r="0.49" opacity="0.84"></circle><circle cx="503.8" cy="97.2" r="0.60" opacity="0.89"></circle><circle cx="516.8" cy="98.7" r="0.56" opacity="0.86"></circle><circle cx="518.1" cy="98.2" r="0.76" opacity="0.94"></circle></g><path d="M517.8 105.2 L519.2 103.8 L520.8 105.2 L519.2 106.8Z"></path><circle cx="531.0" cy="97.8" r="5.2" opacity="0.6"></circle><circle cx="533.9" cy="102.9" r="0.61" opacity="0.83"></circle><circle cx="537.8" cy="98.2" r="0.73" opacity="0.88"></circle><circle cx="534.9" cy="101.2" r="0.45" opacity="0.61"></circle><circle cx="536.7" cy="96.1" r="0.89" opacity="1.00"></circle><circle cx="535.3" cy="102.9" r="0.82" opacity="0.62"></circle><circle cx="537.7" cy="98.0" r="0.80" opacity="0.67"></circle><circle cx="529.8" cy="100.1" r="0.88" opacity="0.77"></circle><circle cx="533.2" cy="92.3" r="0.75" opacity="0.75"></circle><circle cx="535.0" cy="93.4" r="0.61" opacity="0.57"></circle><circle cx="533.6" cy="98.8" r="0.48" opacity="0.70"></circle><circle cx="525.2" cy="97.7" r="0.76" opacity="0.94"></circle><circle cx="536.0" cy="102.6" r="0.75" opacity="0.60"></circle><circle cx="530.7" cy="100.3" r="0.50" opacity="0.89"></circle><circle cx="526.1" cy="93.3" r="0.66" opacity="0.88"></circle><circle cx="531.5" cy="91.4" r="0.50" opacity="0.75"></circle><circle cx="524.8" cy="100.7" r="0.87" opacity="0.57"></circle><circle cx="537.4" cy="99.3" r="0.49" opacity="0.51"></circle><circle cx="534.1" cy="104.3" r="0.54" opacity="0.98"></circle><circle cx="531.6" cy="94.1" r="0.58" opacity="0.96"></circle><circle cx="534.8" cy="102.3" r="0.65" opacity="0.78"></circle><circle cx="530.2" cy="98.7" r="0.43" opacity="0.72"></circle><circle cx="533.9" cy="101.4" r="0.40" opacity="0.65"></circle><circle cx="532.9" cy="99.6" r="0.74" opacity="0.70"></circle><circle cx="531.3" cy="100.0" r="0.51" opacity="0.85"></circle><circle cx="528.1" cy="92.2" r="0.48" opacity="0.97"></circle><circle cx="527.5" cy="98.7" r="0.49" opacity="0.93"></circle><circle cx="535.5" cy="100.0" r="0.58" opacity="0.64"></circle><circle cx="536.7" cy="100.8" r="0.83" opacity="0.86"></circle><circle cx="527.2" cy="95.8" r="0.37" opacity="0.65"></circle><circle cx="537.0" cy="96.9" r="0.73" opacity="0.56"></circle><circle cx="537.5" cy="95.2" r="0.65" opacity="0.83"></circle><circle cx="531.9" cy="103.8" r="0.64" opacity="0.92"></circle><circle cx="527.7" cy="96.6" r="0.89" opacity="0.80"></circle><circle cx="533.4" cy="101.1" r="0.79" opacity="0.95"></circle><circle cx="524.7" cy="95.8" r="0.66" opacity="0.59"></circle><circle cx="531.4" cy="103.3" r="0.62" opacity="0.56"></circle><circle cx="535.7" cy="103.2" r="0.54" opacity="0.95"></circle><circle cx="535.5" cy="95.1" r="0.61" opacity="0.95"></circle><circle cx="536.9" cy="96.8" r="0.65" opacity="0.58"></circle><circle cx="530.1" cy="98.2" r="0.73" opacity="0.78"></circle><circle cx="525.4" cy="101.3" r="0.80" opacity="0.80"></circle><circle cx="527.7" cy="97.9" r="0.81" opacity="0.53"></circle><circle cx="526.5" cy="94.2" r="0.40" opacity="0.51"></circle><circle cx="525.9" cy="94.4" r="0.50" opacity="0.82"></circle><circle cx="535.7" cy="101.5" r="0.61" opacity="0.86"></circle><circle cx="529.0" cy="98.5" r="0.72" opacity="0.56"></circle><circle cx="531.0" cy="90.6" r="0.53" opacity="0.90"></circle><circle cx="529.5" cy="90.5" r="0.77" opacity="0.56"></circle><circle cx="527.6" cy="93.8" r="0.69" opacity="0.54"></circle><circle cx="533.7" cy="95.5" r="0.79" opacity="0.65"></circle><circle cx="536.8" cy="101.6" r="0.68" opacity="0.85"></circle><circle cx="525.7" cy="93.5" r="0.89" opacity="0.71"></circle><circle cx="532.4" cy="93.6" r="0.59" opacity="0.84"></circle><circle cx="531.0" cy="98.6" r="0.68" opacity="0.78"></circle><circle cx="533.2" cy="101.7" r="0.88" opacity="0.78"></circle><circle cx="536.9" cy="99.4" r="0.62" opacity="0.97"></circle><circle cx="538.5" cy="96.8" r="0.54" opacity="0.75"></circle><circle cx="531.4" cy="90.9" r="0.75" opacity="0.94"></circle><circle cx="534.7" cy="93.2" r="0.90" opacity="0.74"></circle><circle cx="528.6" cy="104.3" r="0.86" opacity="0.63"></circle><g fill="#fff"><circle cx="529.3" cy="101.4" r="0.41" opacity="0.84"></circle><circle cx="534.2" cy="94.1" r="0.42" opacity="0.92"></circle><circle cx="535.0" cy="98.7" r="0.46" opacity="0.83"></circle><circle cx="531.1" cy="99.6" r="0.50" opacity="0.89"></circle><circle cx="531.2" cy="101.3" r="0.33" opacity="0.97"></circle><circle cx="532.5" cy="97.8" r="0.40" opacity="0.91"></circle><circle cx="532.2" cy="100.1" r="0.55" opacity="0.83"></circle><circle cx="530.5" cy="102.0" r="0.52" opacity="0.90"></circle><circle cx="534.0" cy="96.8" r="0.51" opacity="0.85"></circle><circle cx="531.9" cy="96.3" r="0.59" opacity="0.89"></circle><circle cx="533.2" cy="95.6" r="0.49" opacity="0.89"></circle><circle cx="527.9" cy="100.8" r="0.48" opacity="0.91"></circle><circle cx="529.0" cy="94.5" r="0.33" opacity="0.89"></circle><circle cx="526.6" cy="97.0" r="0.32" opacity="0.84"></circle></g><path d="M537.7 105.2 L539.2 103.8 L540.7 105.2 L539.2 106.8Z"></path><circle cx="551.2" cy="97.8" r="7.8" opacity="0.8"></circle><g fill="#fff"><circle cx="553.3" cy="91.1" r="0.65" opacity="0.88"></circle><circle cx="550.1" cy="94.6" r="0.54" opacity="0.92"></circle><circle cx="548.3" cy="101.9" r="0.75" opacity="0.87"></circle><circle cx="552.9" cy="103.8" r="0.62" opacity="0.81"></circle><circle cx="547.5" cy="101.3" r="0.65" opacity="0.83"></circle><circle cx="550.6" cy="92.6" r="0.42" opacity="0.90"></circle><circle cx="548.2" cy="92.6" r="0.48" opacity="0.91"></circle><circle cx="549.8" cy="92.3" r="0.69" opacity="0.82"></circle><circle cx="556.1" cy="94.8" r="0.63" opacity="0.86"></circle><circle cx="548.8" cy="91.2" r="0.83" opacity="0.81"></circle><circle cx="550.2" cy="91.7" r="0.63" opacity="0.84"></circle><circle cx="548.4" cy="97.7" r="0.48" opacity="0.94"></circle><circle cx="557.4" cy="97.5" r="0.48" opacity="0.93"></circle><circle cx="545.3" cy="100.4" r="0.69" opacity="0.96"></circle><circle cx="554.1" cy="93.7" r="0.47" opacity="0.93"></circle><circle cx="546.7" cy="102.2" r="0.55" opacity="0.92"></circle><circle cx="556.4" cy="96.4" r="0.66" opacity="0.99"></circle><circle cx="544.0" cy="98.7" r="0.48" opacity="0.84"></circle><circle cx="553.2" cy="99.8" r="0.42" opacity="0.81"></circle><circle cx="557.4" cy="99.1" r="0.55" opacity="0.84"></circle><circle cx="546.6" cy="102.0" r="0.60" opacity="0.96"></circle><circle cx="554.5" cy="97.2" r="0.79" opacity="0.91"></circle><circle cx="548.3" cy="101.0" r="0.78" opacity="0.88"></circle><circle cx="545.8" cy="95.7" r="0.67" opacity="0.98"></circle><circle cx="550.9" cy="98.8" r="0.40" opacity="0.86"></circle><circle cx="556.0" cy="95.1" r="0.83" opacity="0.95"></circle><circle cx="546.3" cy="93.8" r="0.44" opacity="0.96"></circle><circle cx="553.0" cy="95.4" r="0.44" opacity="0.83"></circle><circle cx="557.0" cy="101.3" r="0.78" opacity="0.83"></circle><circle cx="557.9" cy="94.8" r="0.51" opacity="0.88"></circle><circle cx="552.4" cy="100.0" r="0.54" opacity="0.92"></circle><circle cx="551.3" cy="99.8" r="0.59" opacity="0.90"></circle><circle cx="554.1" cy="99.9" r="0.53" opacity="0.97"></circle><circle cx="546.6" cy="97.8" r="0.85" opacity="0.84"></circle><circle cx="551.6" cy="93.1" r="0.47" opacity="0.93"></circle><circle cx="555.7" cy="98.2" r="0.53" opacity="0.85"></circle><circle cx="552.5" cy="98.4" r="0.45" opacity="0.87"></circle><circle cx="544.6" cy="95.9" r="0.73" opacity="1.00"></circle><circle cx="552.4" cy="101.8" r="0.61" opacity="0.99"></circle><circle cx="555.0" cy="92.3" r="0.59" opacity="0.97"></circle><circle cx="552.6" cy="94.7" r="0.70" opacity="0.82"></circle><circle cx="553.6" cy="91.2" r="0.71" opacity="0.97"></circle><circle cx="553.7" cy="102.5" r="0.75" opacity="0.89"></circle><circle cx="554.4" cy="104.4" r="0.73" opacity="0.86"></circle><circle cx="557.3" cy="94.7" r="0.73" opacity="0.97"></circle><circle cx="546.3" cy="96.9" r="0.81" opacity="0.94"></circle><circle cx="553.4" cy="96.7" r="0.57" opacity="0.95"></circle><circle cx="556.9" cy="93.8" r="0.57" opacity="0.88"></circle><circle cx="552.6" cy="91.4" r="0.68" opacity="0.84"></circle><circle cx="555.4" cy="94.6" r="0.83" opacity="0.91"></circle><circle cx="546.4" cy="94.1" r="0.79" opacity="0.84"></circle><circle cx="547.8" cy="92.6" r="0.50" opacity="0.98"></circle><circle cx="550.5" cy="93.6" r="0.45" opacity="0.96"></circle><circle cx="548.6" cy="101.5" r="0.71" opacity="0.99"></circle><circle cx="552.3" cy="90.5" r="0.76" opacity="0.92"></circle><circle cx="549.1" cy="93.0" r="0.78" opacity="0.81"></circle><circle cx="545.0" cy="97.7" r="0.51" opacity="0.82"></circle><circle cx="550.2" cy="99.0" r="0.41" opacity="0.88"></circle></g><path d="M557.6 105.2 L559.1 103.8 L560.6 105.2 L559.1 106.8Z"></path><circle cx="571.4" cy="97.8" r="7.8" opacity="0.92"></circle><g fill="#fff"><circle cx="567.0" cy="96.7" r="0.57" opacity="0.90"></circle><circle cx="570.5" cy="95.9" r="0.45" opacity="0.89"></circle><circle cx="570.4" cy="102.3" r="0.60" opacity="0.99"></circle><circle cx="571.2" cy="103.6" r="0.58" opacity="0.90"></circle><circle cx="570.0" cy="99.3" r="0.33" opacity="0.99"></circle><circle cx="567.8" cy="94.2" r="0.44" opacity="0.93"></circle><circle cx="573.4" cy="103.8" r="0.65" opacity="0.85"></circle><circle cx="567.5" cy="100.1" r="0.61" opacity="0.94"></circle><circle cx="571.3" cy="93.7" r="0.51" opacity="0.87"></circle><circle cx="571.1" cy="93.6" r="0.41" opacity="0.95"></circle><circle cx="569.1" cy="96.5" r="0.36" opacity="0.87"></circle><circle cx="567.0" cy="98.0" r="0.55" opacity="0.89"></circle></g><circle cx="572.9" cy="95.8" r="2.6" fill="#fff" opacity="0.25"></circle><path d="M577.6 105.2 L579.1 103.8 L580.6 105.2 L579.1 106.8Z"></path><ellipse cx="490.6" cy="117.7" rx="7.2" ry="4.4" opacity="0.85" transform="rotate(-8 490.6 117.7)"></ellipse><path d="M484.6 115.5 Q490.6 113.1 496.6 114.1" stroke="#fff" stroke-width="0.6" fill="none" opacity="0.9"></path><path d="M484.6 117.5 Q490.6 115.1 496.6 116.1" stroke="#fff" stroke-width="0.6" fill="none" opacity="0.9"></path><path d="M484.6 119.5 Q490.6 117.1 496.6 118.1" stroke="#fff" stroke-width="0.6" fill="none" opacity="0.9"></path><path d="M484.6 121.5 Q490.6 119.1 496.6 120.1" stroke="#fff" stroke-width="0.6" fill="none" opacity="0.9"></path><circle cx="492.4" cy="118.3" r="0.60" opacity="0.53"></circle><circle cx="490.3" cy="119.8" r="0.33" opacity="0.75"></circle><circle cx="485.3" cy="118.8" r="0.37" opacity="0.87"></circle><circle cx="496.2" cy="118.5" r="0.37" opacity="0.53"></circle><circle cx="494.4" cy="114.9" r="0.58" opacity="0.60"></circle><circle cx="489.1" cy="118.2" r="0.53" opacity="0.66"></circle><circle cx="494.9" cy="118.4" r="0.30" opacity="0.87"></circle><circle cx="490.5" cy="117.8" r="0.31" opacity="0.59"></circle><circle cx="495.6" cy="116.2" r="0.42" opacity="0.88"></circle><circle cx="494.9" cy="114.9" r="0.49" opacity="0.55"></circle><path d="M497.8 125.2 L499.3 123.7 L500.8 125.2 L499.3 126.7Z"></path><ellipse cx="510.8" cy="117.7" rx="7.2" ry="4.4" opacity="0.6" transform="rotate(-8 510.8 117.7)"></ellipse><path d="M504.8 115.5 Q510.8 113.1 516.8 114.1" stroke="#fff" stroke-width="0.6" fill="none" opacity="0.9"></path><path d="M504.8 117.5 Q510.8 115.1 516.8 116.1" stroke="#fff" stroke-width="0.6" fill="none" opacity="0.9"></path><path d="M504.8 119.5 Q510.8 117.1 516.8 118.1" stroke="#fff" stroke-width="0.6" fill="none" opacity="0.9"></path><path d="M504.8 121.5 Q510.8 119.1 516.8 120.1" stroke="#fff" stroke-width="0.6" fill="none" opacity="0.9"></path><circle cx="514.0" cy="118.3" r="0.46" opacity="0.55"></circle><circle cx="512.9" cy="121.9" r="0.53" opacity="0.53"></circle><circle cx="508.0" cy="121.1" r="0.59" opacity="0.85"></circle><circle cx="515.8" cy="114.8" r="0.43" opacity="0.72"></circle><circle cx="517.1" cy="117.6" r="0.42" opacity="0.85"></circle><circle cx="507.8" cy="118.4" r="0.47" opacity="0.78"></circle><circle cx="513.5" cy="121.9" r="0.50" opacity="0.50"></circle><circle cx="504.6" cy="115.3" r="0.37" opacity="0.85"></circle><circle cx="517.3" cy="117.7" r="0.59" opacity="0.89"></circle><circle cx="514.0" cy="115.9" r="0.56" opacity="0.88"></circle><path d="M517.8 125.2 L519.2 123.7 L520.8 125.2 L519.2 126.7Z"></path><circle cx="532.4" cy="116.3" r="0.42" opacity="0.50"></circle><circle cx="530.6" cy="115.6" r="0.32" opacity="0.49"></circle><circle cx="532.4" cy="121.9" r="0.50" opacity="0.38"></circle><circle cx="530.0" cy="114.3" r="0.25" opacity="0.32"></circle><circle cx="529.4" cy="115.7" r="0.42" opacity="0.33"></circle><circle cx="530.5" cy="112.2" r="0.38" opacity="0.56"></circle><circle cx="530.5" cy="113.5" r="0.34" opacity="0.57"></circle><circle cx="529.2" cy="119.3" r="0.50" opacity="0.39"></circle><circle cx="532.4" cy="119.8" r="0.33" opacity="0.58"></circle><circle cx="531.0" cy="112.6" r="0.34" opacity="0.32"></circle><circle cx="530.4" cy="112.5" r="0.37" opacity="0.59"></circle><circle cx="529.4" cy="113.7" r="0.36" opacity="0.49"></circle><circle cx="530.3" cy="120.9" r="0.33" opacity="0.33"></circle><circle cx="529.3" cy="118.3" r="0.30" opacity="0.52"></circle><circle cx="531.1" cy="117.5" r="0.49" opacity="0.58"></circle><circle cx="530.7" cy="119.0" r="0.32" opacity="0.30"></circle><circle cx="530.5" cy="122.9" r="0.46" opacity="0.56"></circle><circle cx="530.8" cy="122.5" r="0.34" opacity="0.33"></circle><circle cx="530.2" cy="115.8" r="0.41" opacity="0.38"></circle><circle cx="531.5" cy="114.2" r="0.31" opacity="0.35"></circle><circle cx="529.2" cy="117.9" r="0.34" opacity="0.42"></circle><circle cx="532.2" cy="114.5" r="0.47" opacity="0.31"></circle><path d="M537.7 125.2 L539.2 123.7 L540.7 125.2 L539.2 126.7Z"></path><path d="M544.2 119.6 L545.6 116.0" stroke="#000" stroke-width="0.6" fill="none" opacity="0.45"></path><path d="M546.5 120.9 L544.7 113.6" stroke="#000" stroke-width="0.6" fill="none" opacity="0.45"></path><path d="M548.8 119.6 L546.5 116.4" stroke="#000" stroke-width="0.6" fill="none" opacity="0.45"></path><path d="M551.1 119.3 L549.0 111.9" stroke="#000" stroke-width="0.6" fill="none" opacity="0.45"></path><path d="M553.4 119.0 L554.1 115.7" stroke="#000" stroke-width="0.6" fill="none" opacity="0.45"></path><path d="M555.7 122.3 L556.9 112.3" stroke="#000" stroke-width="0.6" fill="none" opacity="0.45"></path><path d="M558.0 120.5 L560.1 112.5" stroke="#000" stroke-width="0.6" fill="none" opacity="0.45"></path><circle cx="555.5" cy="112.8" r="0.29" opacity="0.47"></circle><circle cx="553.3" cy="122.3" r="0.36" opacity="0.45"></circle><circle cx="547.9" cy="111.2" r="0.52" opacity="0.48"></circle><circle cx="549.9" cy="116.0" r="0.51" opacity="0.60"></circle><circle cx="556.0" cy="118.6" r="0.34" opacity="0.54"></circle><circle cx="558.3" cy="115.9" r="0.27" opacity="0.50"></circle><circle cx="550.4" cy="121.1" r="0.52" opacity="0.42"></circle><circle cx="556.5" cy="113.2" r="0.55" opacity="0.77"></circle><circle cx="555.7" cy="122.8" r="0.30" opacity="0.68"></circle><circle cx="554.0" cy="111.9" r="0.50" opacity="0.67"></circle><circle cx="550.9" cy="118.8" r="0.26" opacity="0.69"></circle><circle cx="549.5" cy="115.9" r="0.44" opacity="0.74"></circle><circle cx="551.3" cy="116.3" r="0.46" opacity="0.65"></circle><circle cx="545.9" cy="120.7" r="0.53" opacity="0.67"></circle><circle cx="547.0" cy="117.0" r="0.52" opacity="0.53"></circle><circle cx="549.4" cy="123.4" r="0.29" opacity="0.72"></circle><path d="M557.6 125.2 L559.1 123.7 L560.6 125.2 L559.1 126.7Z"></path><path d="M564.4 121.9 L566.5 112.6" stroke="#000" stroke-width="0.6" fill="none" opacity="0.45"></path><path d="M566.7 119.9 L566.4 113.4" stroke="#000" stroke-width="0.6" fill="none" opacity="0.45"></path><path d="M569.0 121.1 L568.3 117.0" stroke="#000" stroke-width="0.6" fill="none" opacity="0.45"></path><path d="M571.3 120.9 L572.3 116.9" stroke="#000" stroke-width="0.6" fill="none" opacity="0.45"></path><path d="M573.6 119.4 L572.4 116.9" stroke="#000" stroke-width="0.6" fill="none" opacity="0.45"></path><path d="M575.9 121.8 L576.8 117.3" stroke="#000" stroke-width="0.6" fill="none" opacity="0.45"></path><path d="M578.2 121.4 L578.2 116.3" stroke="#000" stroke-width="0.6" fill="none" opacity="0.45"></path><circle cx="572.0" cy="112.1" r="0.54" opacity="0.48"></circle><circle cx="567.7" cy="123.0" r="0.27" opacity="0.70"></circle><circle cx="566.8" cy="114.2" r="0.46" opacity="0.60"></circle><circle cx="576.0" cy="120.5" r="0.45" opacity="0.64"></circle><circle cx="566.2" cy="119.8" r="0.45" opacity="0.68"></circle><circle cx="570.0" cy="124.5" r="0.40" opacity="0.77"></circle><circle cx="577.7" cy="114.9" r="0.44" opacity="0.51"></circle><circle cx="568.2" cy="115.5" r="0.44" opacity="0.51"></circle><circle cx="568.9" cy="116.8" r="0.41" opacity="0.55"></circle><circle cx="570.4" cy="116.9" r="0.35" opacity="0.62"></circle><circle cx="569.8" cy="113.3" r="0.37" opacity="0.47"></circle><circle cx="573.7" cy="118.8" r="0.26" opacity="0.45"></circle><circle cx="567.4" cy="124.0" r="0.47" opacity="0.46"></circle><circle cx="576.9" cy="118.7" r="0.26" opacity="0.48"></circle><circle cx="577.8" cy="114.4" r="0.34" opacity="0.52"></circle><circle cx="573.4" cy="123.5" r="0.48" opacity="0.68"></circle><path d="M577.6 125.2 L579.1 123.7 L580.6 125.2 L579.1 126.7Z"></path><circle cx="490.6" cy="137.6" r="8" opacity="0.1"></circle><circle cx="492.5" cy="130.4" r="0.71" opacity="0.62"></circle><circle cx="483.4" cy="133.7" r="0.46" opacity="0.40"></circle><circle cx="487.7" cy="141.9" r="0.66" opacity="0.40"></circle><circle cx="492.6" cy="135.5" r="0.60" opacity="0.45"></circle><circle cx="486.6" cy="134.3" r="0.38" opacity="0.51"></circle><circle cx="495.4" cy="144.0" r="0.57" opacity="0.47"></circle><circle cx="494.9" cy="136.4" r="0.47" opacity="0.67"></circle><circle cx="489.4" cy="145.5" r="0.71" opacity="0.63"></circle><circle cx="494.4" cy="143.2" r="0.48" opacity="0.37"></circle><circle cx="489.8" cy="131.5" r="0.57" opacity="0.54"></circle><circle cx="495.4" cy="133.8" r="0.53" opacity="0.56"></circle><circle cx="484.7" cy="138.7" r="0.62" opacity="0.37"></circle><circle cx="491.1" cy="137.8" r="0.74" opacity="0.66"></circle><circle cx="485.3" cy="144.0" r="0.53" opacity="0.45"></circle><circle cx="495.7" cy="140.6" r="0.37" opacity="0.50"></circle><circle cx="491.7" cy="129.8" r="0.66" opacity="0.50"></circle><circle cx="484.1" cy="134.3" r="0.45" opacity="0.56"></circle><circle cx="498.5" cy="136.3" r="0.42" opacity="0.38"></circle><circle cx="498.2" cy="140.6" r="0.45" opacity="0.53"></circle><circle cx="498.5" cy="136.4" r="0.60" opacity="0.69"></circle><circle cx="487.0" cy="132.4" r="0.55" opacity="0.54"></circle><circle cx="488.3" cy="142.6" r="0.42" opacity="0.60"></circle><circle cx="483.9" cy="138.1" r="0.69" opacity="0.57"></circle><circle cx="487.0" cy="139.3" r="0.40" opacity="0.55"></circle><circle cx="493.6" cy="131.6" r="0.73" opacity="0.39"></circle><circle cx="494.4" cy="134.3" r="0.64" opacity="0.46"></circle><circle cx="494.1" cy="144.6" r="0.58" opacity="0.65"></circle><circle cx="493.6" cy="133.1" r="0.36" opacity="0.62"></circle><circle cx="492.8" cy="137.3" r="0.72" opacity="0.55"></circle><circle cx="488.5" cy="132.1" r="0.45" opacity="0.46"></circle><circle cx="495.3" cy="133.4" r="0.65" opacity="0.42"></circle><circle cx="493.1" cy="137.5" r="0.37" opacity="0.66"></circle><circle cx="496.9" cy="137.9" r="0.48" opacity="0.38"></circle><circle cx="494.4" cy="136.7" r="0.47" opacity="0.37"></circle><circle cx="485.4" cy="139.0" r="0.41" opacity="0.53"></circle><circle cx="492.7" cy="131.7" r="0.67" opacity="0.61"></circle><circle cx="488.2" cy="130.0" r="0.61" opacity="0.59"></circle><circle cx="490.9" cy="140.0" r="0.54" opacity="0.44"></circle><circle cx="489.4" cy="140.9" r="0.51" opacity="0.41"></circle><circle cx="495.8" cy="136.0" r="0.43" opacity="0.60"></circle><circle cx="495.3" cy="144.2" r="0.53" opacity="0.57"></circle><circle cx="489.5" cy="136.3" r="0.63" opacity="0.36"></circle><circle cx="493.8" cy="130.4" r="0.37" opacity="0.51"></circle><circle cx="483.2" cy="134.4" r="0.59" opacity="0.44"></circle><circle cx="490.7" cy="132.0" r="0.64" opacity="0.57"></circle><circle cx="490.1" cy="136.6" r="0.44" opacity="0.49"></circle><circle cx="482.9" cy="138.0" r="0.61" opacity="0.44"></circle><circle cx="489.2" cy="135.4" r="0.42" opacity="0.51"></circle><circle cx="492.3" cy="135.0" r="0.55" opacity="0.53"></circle><circle cx="494.3" cy="133.0" r="0.70" opacity="0.46"></circle><circle cx="495.0" cy="134.0" r="0.45" opacity="0.64"></circle><circle cx="487.0" cy="133.4" r="0.39" opacity="0.39"></circle><circle cx="485.5" cy="143.4" r="0.44" opacity="0.54"></circle><circle cx="492.6" cy="140.0" r="0.47" opacity="0.49"></circle><circle cx="485.7" cy="133.8" r="0.41" opacity="0.54"></circle><circle cx="491.6" cy="142.9" r="0.71" opacity="0.50"></circle><circle cx="495.9" cy="135.1" r="0.57" opacity="0.68"></circle><circle cx="485.5" cy="142.3" r="0.68" opacity="0.38"></circle><circle cx="491.3" cy="136.1" r="0.37" opacity="0.56"></circle><circle cx="492.9" cy="133.1" r="0.56" opacity="0.44"></circle><circle cx="484.5" cy="138.3" r="0.48" opacity="0.52"></circle><circle cx="495.9" cy="134.3" r="0.35" opacity="0.41"></circle><circle cx="482.9" cy="137.7" r="0.47" opacity="0.68"></circle><circle cx="494.9" cy="144.3" r="0.71" opacity="0.67"></circle><circle cx="483.3" cy="141.1" r="0.57" opacity="0.54"></circle><circle cx="483.0" cy="140.6" r="0.57" opacity="0.50"></circle><circle cx="486.9" cy="134.1" r="0.71" opacity="0.49"></circle><circle cx="497.6" cy="133.9" r="0.70" opacity="0.54"></circle><circle cx="483.8" cy="135.9" r="0.72" opacity="0.44"></circle><circle cx="486.0" cy="141.5" r="0.53" opacity="0.46"></circle><circle cx="484.9" cy="138.2" r="0.49" opacity="0.69"></circle><circle cx="483.5" cy="135.7" r="0.66" opacity="0.67"></circle><circle cx="496.8" cy="137.2" r="0.39" opacity="0.66"></circle><circle cx="489.4" cy="139.4" r="0.73" opacity="0.60"></circle><circle cx="495.8" cy="137.4" r="0.37" opacity="0.38"></circle><circle cx="492.1" cy="141.1" r="0.67" opacity="0.56"></circle><circle cx="491.5" cy="131.0" r="0.68" opacity="0.43"></circle><circle cx="487.8" cy="134.1" r="0.41" opacity="0.66"></circle><circle cx="497.0" cy="136.7" r="0.47" opacity="0.44"></circle><circle cx="495.9" cy="134.6" r="0.43" opacity="0.61"></circle><circle cx="487.8" cy="136.8" r="0.67" opacity="0.35"></circle><circle cx="497.2" cy="138.5" r="0.72" opacity="0.51"></circle><circle cx="494.5" cy="133.3" r="0.51" opacity="0.53"></circle><circle cx="497.7" cy="138.1" r="0.64" opacity="0.69"></circle><circle cx="490.0" cy="131.5" r="0.54" opacity="0.43"></circle><circle cx="491.8" cy="136.6" r="0.59" opacity="0.49"></circle><circle cx="482.9" cy="135.4" r="0.53" opacity="0.49"></circle><circle cx="488.6" cy="135.9" r="0.52" opacity="0.36"></circle><circle cx="487.8" cy="140.6" r="0.58" opacity="0.68"></circle><circle cx="495.9" cy="143.3" r="0.56" opacity="0.65"></circle><circle cx="492.9" cy="131.8" r="0.61" opacity="0.48"></circle><circle cx="495.6" cy="140.6" r="0.36" opacity="0.59"></circle><circle cx="498.0" cy="140.5" r="0.61" opacity="0.38"></circle><circle cx="492.8" cy="144.4" r="0.61" opacity="0.65"></circle><circle cx="492.5" cy="130.5" r="0.71" opacity="0.49"></circle><path d="M497.8 145.1 L499.3 143.6 L500.8 145.1 L499.3 146.6Z"></path><ellipse cx="510.8" cy="137.6" rx="5.6" ry="5" opacity="0.7"></ellipse><circle cx="509.9" cy="138.0" r="0.95" opacity="0.80"></circle><circle cx="515.6" cy="135.6" r="0.62" opacity="0.98"></circle><circle cx="510.5" cy="137.2" r="0.48" opacity="0.72"></circle><circle cx="510.7" cy="137.7" r="0.68" opacity="0.62"></circle><circle cx="514.7" cy="135.4" r="0.65" opacity="0.77"></circle><circle cx="514.7" cy="142.8" r="0.81" opacity="1.00"></circle><circle cx="516.4" cy="139.0" r="0.96" opacity="0.82"></circle><circle cx="512.1" cy="135.5" r="0.99" opacity="0.97"></circle><circle cx="510.1" cy="137.1" r="0.76" opacity="0.89"></circle><circle cx="508.9" cy="133.1" r="0.88" opacity="0.54"></circle><circle cx="507.2" cy="136.1" r="0.50" opacity="0.51"></circle><circle cx="514.6" cy="137.3" r="0.51" opacity="0.89"></circle><circle cx="508.4" cy="138.4" r="0.70" opacity="0.94"></circle><circle cx="509.2" cy="138.5" r="0.73" opacity="0.69"></circle><circle cx="508.6" cy="136.3" r="0.57" opacity="0.57"></circle><circle cx="510.8" cy="137.6" r="0.47" opacity="0.61"></circle><circle cx="515.0" cy="134.4" r="0.42" opacity="0.59"></circle><circle cx="510.1" cy="137.6" r="0.63" opacity="0.69"></circle><circle cx="512.0" cy="139.9" r="0.61" opacity="0.58"></circle><circle cx="512.3" cy="133.0" r="0.59" opacity="0.81"></circle><circle cx="506.0" cy="140.8" r="0.97" opacity="0.94"></circle><circle cx="517.1" cy="135.4" r="0.39" opacity="0.76"></circle><circle cx="514.1" cy="135.7" r="0.46" opacity="0.62"></circle><circle cx="508.0" cy="139.2" r="0.85" opacity="0.79"></circle><circle cx="504.9" cy="131.3" r="0.59" opacity="0.75"></circle><circle cx="511.7" cy="139.5" r="0.88" opacity="0.71"></circle><circle cx="509.8" cy="137.6" r="0.51" opacity="0.95"></circle><circle cx="515.7" cy="134.7" r="0.93" opacity="0.61"></circle><circle cx="510.5" cy="134.6" r="0.36" opacity="0.80"></circle><circle cx="507.0" cy="136.9" r="0.93" opacity="0.74"></circle><circle cx="510.6" cy="138.1" r="0.73" opacity="0.61"></circle><circle cx="514.7" cy="143.2" r="0.95" opacity="0.74"></circle><circle cx="511.5" cy="139.4" r="0.74" opacity="0.93"></circle><circle cx="516.3" cy="139.1" r="0.51" opacity="0.75"></circle><circle cx="510.3" cy="137.7" r="0.63" opacity="0.95"></circle><circle cx="510.1" cy="142.9" r="0.47" opacity="0.88"></circle><circle cx="511.7" cy="137.9" r="0.42" opacity="0.54"></circle><circle cx="513.7" cy="136.8" r="0.75" opacity="0.77"></circle><circle cx="514.9" cy="141.0" r="0.87" opacity="0.94"></circle><circle cx="502.2" cy="136.8" r="0.97" opacity="0.94"></circle><circle cx="510.0" cy="134.5" r="0.80" opacity="0.53"></circle><circle cx="510.0" cy="136.5" r="0.84" opacity="0.72"></circle><circle cx="510.2" cy="138.4" r="0.73" opacity="0.86"></circle><circle cx="512.6" cy="142.3" r="0.58" opacity="0.83"></circle><circle cx="511.7" cy="141.4" r="0.52" opacity="0.51"></circle><circle cx="511.4" cy="141.0" r="0.93" opacity="0.75"></circle><circle cx="510.9" cy="138.3" r="0.50" opacity="0.64"></circle><circle cx="510.9" cy="137.6" r="0.85" opacity="0.89"></circle><circle cx="510.0" cy="139.9" r="0.93" opacity="0.66"></circle><circle cx="512.3" cy="136.5" r="0.39" opacity="0.54"></circle><circle cx="510.9" cy="135.8" r="0.74" opacity="0.52"></circle><circle cx="512.0" cy="137.7" r="0.47" opacity="0.87"></circle><circle cx="513.4" cy="141.1" r="0.36" opacity="0.72"></circle><circle cx="510.5" cy="137.6" r="0.82" opacity="0.77"></circle><circle cx="508.0" cy="130.4" r="0.49" opacity="0.79"></circle><g fill="#fff"><circle cx="510.3" cy="139.0" r="0.47" opacity="0.94"></circle><circle cx="513.1" cy="136.9" r="0.49" opacity="0.89"></circle><circle cx="510.0" cy="138.8" r="0.47" opacity="0.97"></circle><circle cx="512.0" cy="138.8" r="0.47" opacity="0.83"></circle><circle cx="509.7" cy="139.0" r="0.47" opacity="0.89"></circle><circle cx="508.3" cy="139.1" r="0.31" opacity="0.82"></circle></g><path d="M517.8 145.1 L519.2 143.6 L520.8 145.1 L519.2 146.6Z"></path><path d="M524.5 133.6 L537.5 132.4" stroke="#000" stroke-width="0.9" fill="none" opacity="0.8"></path><path d="M524.5 135.9 L537.5 134.7" stroke="#000" stroke-width="0.9" fill="none" opacity="0.8"></path><path d="M524.5 138.2 L537.5 137.0" stroke="#000" stroke-width="0.9" fill="none" opacity="0.8"></path><path d="M524.5 140.5 L537.5 139.3" stroke="#000" stroke-width="0.9" fill="none" opacity="0.8"></path><path d="M524.5 142.8 L537.5 141.6" stroke="#000" stroke-width="0.9" fill="none" opacity="0.8"></path><path d="M537.7 145.1 L539.2 143.6 L540.7 145.1 L539.2 146.6Z"></path><ellipse cx="551.2" cy="137.6" rx="5.6" ry="5" opacity="0.7"></ellipse><circle cx="550.6" cy="138.0" r="0.44" opacity="0.77"></circle><circle cx="547.2" cy="139.8" r="0.60" opacity="0.68"></circle><circle cx="555.9" cy="135.1" r="0.36" opacity="0.87"></circle><circle cx="550.6" cy="137.5" r="0.41" opacity="0.87"></circle><circle cx="551.2" cy="137.0" r="0.48" opacity="0.53"></circle><circle cx="551.8" cy="138.6" r="0.37" opacity="0.74"></circle><circle cx="553.8" cy="135.7" r="0.83" opacity="0.93"></circle><circle cx="548.7" cy="143.6" r="0.68" opacity="0.77"></circle><circle cx="549.6" cy="139.1" r="0.75" opacity="0.82"></circle><circle cx="549.6" cy="133.1" r="0.52" opacity="0.72"></circle><circle cx="549.0" cy="135.5" r="0.81" opacity="0.98"></circle><circle cx="554.5" cy="140.1" r="0.56" opacity="0.93"></circle><circle cx="547.5" cy="137.7" r="0.37" opacity="0.75"></circle><circle cx="550.7" cy="138.9" r="0.77" opacity="0.53"></circle><circle cx="553.5" cy="140.6" r="0.51" opacity="0.78"></circle><circle cx="548.5" cy="139.1" r="0.77" opacity="0.59"></circle><circle cx="552.7" cy="133.5" r="0.67" opacity="0.97"></circle><circle cx="551.2" cy="137.9" r="0.46" opacity="0.84"></circle><circle cx="557.9" cy="138.2" r="0.77" opacity="0.53"></circle><circle cx="555.9" cy="140.0" r="0.76" opacity="0.81"></circle><circle cx="549.0" cy="139.6" r="0.52" opacity="0.75"></circle><circle cx="548.8" cy="137.7" r="0.39" opacity="0.87"></circle><circle cx="553.8" cy="136.2" r="0.49" opacity="0.72"></circle><circle cx="550.9" cy="137.0" r="0.46" opacity="0.78"></circle><circle cx="549.7" cy="131.9" r="0.93" opacity="0.61"></circle><circle cx="550.1" cy="139.6" r="0.40" opacity="0.73"></circle><circle cx="552.3" cy="136.1" r="0.73" opacity="0.76"></circle><circle cx="550.7" cy="130.7" r="0.60" opacity="0.72"></circle><circle cx="551.5" cy="136.0" r="0.69" opacity="0.52"></circle><circle cx="552.8" cy="129.1" r="0.58" opacity="0.81"></circle><circle cx="547.5" cy="133.4" r="0.36" opacity="0.61"></circle><circle cx="548.2" cy="139.7" r="0.65" opacity="0.82"></circle><circle cx="549.7" cy="139.0" r="0.63" opacity="0.51"></circle><circle cx="549.2" cy="138.8" r="0.50" opacity="0.94"></circle><circle cx="546.5" cy="144.8" r="0.60" opacity="0.74"></circle><circle cx="552.2" cy="140.1" r="0.39" opacity="0.93"></circle><circle cx="552.2" cy="137.7" r="0.93" opacity="0.69"></circle><circle cx="546.6" cy="139.8" r="0.42" opacity="0.84"></circle><circle cx="548.8" cy="132.6" r="0.75" opacity="0.51"></circle><circle cx="549.2" cy="135.6" r="0.57" opacity="0.73"></circle><circle cx="553.5" cy="141.9" r="0.78" opacity="0.59"></circle><circle cx="554.7" cy="138.0" r="0.76" opacity="0.70"></circle><circle cx="550.5" cy="137.2" r="0.97" opacity="0.63"></circle><circle cx="552.0" cy="138.0" r="0.72" opacity="0.61"></circle><circle cx="550.5" cy="136.9" r="0.38" opacity="0.80"></circle><circle cx="557.0" cy="141.3" r="0.91" opacity="0.70"></circle><circle cx="551.2" cy="137.6" r="0.56" opacity="0.73"></circle><circle cx="551.5" cy="131.8" r="0.79" opacity="0.99"></circle><circle cx="548.6" cy="139.2" r="0.43" opacity="0.80"></circle><circle cx="551.0" cy="137.6" r="0.37" opacity="0.81"></circle><circle cx="553.2" cy="142.5" r="0.42" opacity="0.55"></circle><circle cx="552.8" cy="136.3" r="0.94" opacity="0.59"></circle><circle cx="552.1" cy="142.5" r="0.47" opacity="0.89"></circle><circle cx="550.3" cy="137.7" r="0.71" opacity="0.88"></circle><circle cx="548.8" cy="132.0" r="0.91" opacity="0.51"></circle><g fill="#fff"><circle cx="550.4" cy="138.8" r="0.48" opacity="0.98"></circle><circle cx="552.8" cy="139.9" r="0.50" opacity="0.87"></circle><circle cx="554.3" cy="135.9" r="0.40" opacity="0.93"></circle><circle cx="550.4" cy="139.8" r="0.47" opacity="0.81"></circle><circle cx="551.3" cy="134.7" r="0.41" opacity="0.88"></circle><circle cx="553.7" cy="134.5" r="0.48" opacity="0.98"></circle></g><path d="M557.6 145.1 L559.1 143.6 L560.6 145.1 L559.1 146.6Z"></path><ellipse cx="570.4" cy="136.6" rx="4.5" ry="4" opacity="0.45"></ellipse><circle cx="571.1" cy="138.2" r="0.61" opacity="0.65"></circle><circle cx="566.8" cy="139.4" r="0.37" opacity="0.79"></circle><circle cx="571.4" cy="139.5" r="0.73" opacity="0.46"></circle><circle cx="573.6" cy="142.3" r="0.30" opacity="0.47"></circle><circle cx="572.1" cy="142.1" r="0.44" opacity="0.45"></circle><circle cx="567.4" cy="136.3" r="0.69" opacity="0.70"></circle><circle cx="575.6" cy="141.0" r="0.34" opacity="0.60"></circle><circle cx="573.9" cy="137.8" r="0.52" opacity="0.77"></circle><circle cx="571.7" cy="141.2" r="0.54" opacity="0.43"></circle><circle cx="569.6" cy="140.6" r="0.67" opacity="0.73"></circle><circle cx="575.9" cy="131.9" r="0.32" opacity="0.65"></circle><circle cx="573.2" cy="143.8" r="0.46" opacity="0.68"></circle><circle cx="569.4" cy="137.2" r="0.78" opacity="0.55"></circle><circle cx="572.8" cy="136.0" r="0.51" opacity="0.72"></circle><circle cx="569.7" cy="141.6" r="0.31" opacity="0.77"></circle><circle cx="569.4" cy="141.6" r="0.76" opacity="0.52"></circle><circle cx="571.3" cy="136.7" r="0.65" opacity="0.79"></circle><circle cx="571.5" cy="137.7" r="0.36" opacity="0.40"></circle><circle cx="574.4" cy="138.0" r="0.45" opacity="0.44"></circle><circle cx="566.7" cy="133.8" r="0.35" opacity="0.48"></circle><circle cx="572.2" cy="140.3" r="0.66" opacity="0.36"></circle><circle cx="571.8" cy="138.2" r="0.34" opacity="0.69"></circle><circle cx="573.0" cy="137.0" r="0.65" opacity="0.57"></circle><circle cx="571.1" cy="137.5" r="0.71" opacity="0.38"></circle><circle cx="572.4" cy="137.1" r="0.67" opacity="0.73"></circle><circle cx="573.5" cy="135.8" r="0.32" opacity="0.76"></circle><circle cx="571.5" cy="139.3" r="0.68" opacity="0.74"></circle><circle cx="571.5" cy="137.3" r="0.68" opacity="0.42"></circle><circle cx="571.4" cy="136.9" r="0.58" opacity="0.66"></circle><circle cx="570.8" cy="134.3" r="0.39" opacity="0.44"></circle><circle cx="569.2" cy="140.0" r="0.65" opacity="0.77"></circle><circle cx="571.3" cy="137.6" r="0.48" opacity="0.73"></circle><circle cx="572.0" cy="136.0" r="0.31" opacity="0.73"></circle><circle cx="569.0" cy="136.2" r="0.67" opacity="0.77"></circle><circle cx="569.5" cy="141.3" r="0.67" opacity="0.67"></circle><circle cx="567.8" cy="146.1" r="0.73" opacity="0.79"></circle><circle cx="571.0" cy="138.1" r="0.32" opacity="0.72"></circle><circle cx="571.4" cy="136.8" r="0.49" opacity="0.74"></circle><circle cx="573.1" cy="132.0" r="0.39" opacity="0.80"></circle><circle cx="571.6" cy="128.4" r="0.56" opacity="0.65"></circle><circle cx="572.2" cy="140.6" r="0.79" opacity="0.78"></circle><circle cx="580.1" cy="140.7" r="0.70" opacity="0.53"></circle><circle cx="571.9" cy="138.8" r="0.59" opacity="0.64"></circle><circle cx="573.5" cy="137.6" r="0.70" opacity="0.74"></circle><circle cx="572.9" cy="136.3" r="0.50" opacity="0.78"></circle><path d="M577.6 145.1 L579.1 143.6 L580.6 145.1 L579.1 146.6Z"></path><circle cx="490.7" cy="160.8" r="0.28" opacity="0.27"></circle><circle cx="493.5" cy="157.9" r="0.48" opacity="0.39"></circle><circle cx="484.6" cy="159.3" r="0.54" opacity="0.23"></circle><circle cx="492.8" cy="163.0" r="0.31" opacity="0.40"></circle><circle cx="495.0" cy="155.2" r="0.43" opacity="0.48"></circle><circle cx="490.4" cy="161.7" r="0.47" opacity="0.36"></circle><circle cx="490.8" cy="157.0" r="0.45" opacity="0.28"></circle><circle cx="493.7" cy="154.0" r="0.43" opacity="0.33"></circle><circle cx="488.7" cy="151.4" r="0.29" opacity="0.43"></circle><circle cx="485.8" cy="158.0" r="0.32" opacity="0.48"></circle><circle cx="483.9" cy="155.8" r="0.48" opacity="0.47"></circle><circle cx="495.9" cy="154.6" r="0.39" opacity="0.21"></circle><circle cx="490.6" cy="153.1" r="0.51" opacity="0.26"></circle><circle cx="488.9" cy="163.4" r="0.34" opacity="0.42"></circle><circle cx="496.2" cy="158.9" r="0.29" opacity="0.24"></circle><circle cx="489.9" cy="160.8" r="0.33" opacity="0.44"></circle><circle cx="491.2" cy="158.4" r="0.30" opacity="0.31"></circle><circle cx="489.8" cy="153.7" r="0.40" opacity="0.25"></circle><circle cx="489.2" cy="162.4" r="0.44" opacity="0.44"></circle><circle cx="487.0" cy="161.2" r="0.39" opacity="0.20"></circle><circle cx="487.9" cy="153.8" r="0.31" opacity="0.41"></circle><circle cx="492.8" cy="163.4" r="0.27" opacity="0.32"></circle><circle cx="484.1" cy="158.7" r="0.34" opacity="0.21"></circle><circle cx="486.8" cy="155.1" r="0.42" opacity="0.24"></circle><circle cx="487.7" cy="154.7" r="0.31" opacity="0.42"></circle><circle cx="485.2" cy="158.5" r="0.30" opacity="0.39"></circle><circle cx="496.2" cy="155.1" r="0.48" opacity="0.38"></circle><circle cx="494.9" cy="156.7" r="0.26" opacity="0.49"></circle><path d="M485.6 154.4 q3 -3 5 0 t4 3 t-6 3 t-3 -4" stroke="#000" stroke-width="0.5" fill="none" opacity="0.35"></path><path d="M497.8 165.1 L499.3 163.6 L500.8 165.1 L499.3 166.6Z"></path><ellipse cx="510.8" cy="157.4" rx="1.0" ry="5.5" opacity="0.5"></ellipse><circle cx="510.6" cy="159.7" r="0.26" opacity="0.50"></circle><circle cx="508.3" cy="157.6" r="0.31" opacity="0.50"></circle><circle cx="508.4" cy="157.5" r="0.30" opacity="0.31"></circle><circle cx="509.0" cy="155.5" r="0.35" opacity="0.58"></circle><circle cx="513.6" cy="157.1" r="0.42" opacity="0.46"></circle><circle cx="509.1" cy="157.1" r="0.43" opacity="0.52"></circle><circle cx="512.5" cy="159.6" r="0.47" opacity="0.39"></circle><circle cx="511.3" cy="155.7" r="0.49" opacity="0.39"></circle><path d="M517.8 165.1 L519.2 163.6 L520.8 165.1 L519.2 166.6Z"></path><circle cx="530.2" cy="160.8" r="0.42" opacity="0.74"></circle><circle cx="531.2" cy="154.6" r="0.58" opacity="0.98"></circle><circle cx="531.4" cy="158.2" r="0.54" opacity="0.93"></circle><circle cx="532.0" cy="157.2" r="0.35" opacity="0.95"></circle><circle cx="530.2" cy="154.5" r="0.46" opacity="0.80"></circle><circle cx="531.8" cy="157.0" r="0.33" opacity="0.99"></circle><circle cx="531.5" cy="156.6" r="0.40" opacity="0.84"></circle><circle cx="531.9" cy="155.2" r="0.37" opacity="0.74"></circle><circle cx="531.4" cy="155.1" r="0.42" opacity="0.87"></circle><path d="M537.7 165.1 L539.2 163.6 L540.7 165.1 L539.2 166.6Z"></path><ellipse cx="551.2" cy="157.4" rx="1.9" ry="7" opacity="0.92"></ellipse><circle cx="552.5" cy="158.5" r="0.50" opacity="0.68"></circle><circle cx="553.1" cy="156.7" r="0.38" opacity="0.97"></circle><circle cx="551.3" cy="159.8" r="0.39" opacity="0.86"></circle><circle cx="551.8" cy="161.6" r="0.33" opacity="0.80"></circle><circle cx="550.5" cy="152.8" r="0.31" opacity="0.56"></circle><circle cx="551.9" cy="158.1" r="0.50" opacity="0.98"></circle><circle cx="552.6" cy="159.1" r="0.58" opacity="0.53"></circle><circle cx="550.7" cy="157.5" r="0.48" opacity="0.76"></circle><circle cx="551.5" cy="157.1" r="0.42" opacity="0.65"></circle><circle cx="554.3" cy="158.4" r="0.42" opacity="0.78"></circle><circle cx="551.0" cy="159.0" r="0.45" opacity="0.79"></circle><circle cx="548.5" cy="161.3" r="0.59" opacity="0.83"></circle><path d="M557.6 165.1 L559.1 163.6 L560.6 165.1 L559.1 166.6Z"></path><path d="M562.5 157.2 L575.5 165.7" stroke="#000" stroke-width="0.85" fill="none" opacity="0.9"></path><path d="M563.7 155.4 L576.7 163.9" stroke="#000" stroke-width="0.85" fill="none" opacity="0.9"></path><path d="M564.9 153.6 L577.9 162.1" stroke="#000" stroke-width="0.85" fill="none" opacity="0.9"></path><path d="M566.1 151.8 L579.1 160.3" stroke="#000" stroke-width="0.85" fill="none" opacity="0.9"></path><path d="M567.3 150.0 L580.3 158.5" stroke="#000" stroke-width="0.85" fill="none" opacity="0.9"></path><path d="M577.6 165.1 L579.1 163.6 L580.6 165.1 L579.1 166.6Z"></path><circle cx="490.8" cy="172.8" r="0.45" opacity="0.38"></circle><circle cx="491.7" cy="171.2" r="0.40" opacity="0.38"></circle><circle cx="488.9" cy="174.3" r="0.41" opacity="0.42"></circle><circle cx="489.3" cy="172.7" r="0.37" opacity="0.56"></circle><circle cx="487.6" cy="175.8" r="0.41" opacity="0.48"></circle><circle cx="489.1" cy="179.5" r="0.31" opacity="0.30"></circle><circle cx="495.9" cy="178.1" r="0.31" opacity="0.50"></circle><circle cx="487.2" cy="179.2" r="0.42" opacity="0.50"></circle><circle cx="491.9" cy="182.7" r="0.21" opacity="0.34"></circle><circle cx="495.4" cy="171.2" r="0.22" opacity="0.42"></circle><circle cx="485.4" cy="175.1" r="0.32" opacity="0.36"></circle><circle cx="486.2" cy="174.9" r="0.41" opacity="0.52"></circle><circle cx="487.8" cy="173.5" r="0.37" opacity="0.41"></circle><circle cx="493.8" cy="171.9" r="0.30" opacity="0.51"></circle><path d="M497.8 185.1 L499.3 183.6 L500.8 185.1 L499.3 186.6Z"></path><circle cx="510.8" cy="177.2" r="8.6" fill="url(#gsoft)"></circle><circle cx="513.3" cy="177.9" r="0.30" opacity="0.29"></circle><circle cx="515.9" cy="173.7" r="0.59" opacity="0.31"></circle><circle cx="509.6" cy="183.5" r="0.40" opacity="0.49"></circle><circle cx="511.4" cy="179.2" r="0.57" opacity="0.41"></circle><circle cx="513.8" cy="176.0" r="0.61" opacity="0.32"></circle><circle cx="513.1" cy="183.1" r="0.31" opacity="0.34"></circle><circle cx="512.6" cy="171.0" r="0.31" opacity="0.32"></circle><circle cx="505.1" cy="178.0" r="0.62" opacity="0.40"></circle><circle cx="507.7" cy="177.2" r="0.60" opacity="0.22"></circle><circle cx="512.6" cy="176.3" r="0.65" opacity="0.21"></circle><circle cx="515.6" cy="179.9" r="0.57" opacity="0.28"></circle><circle cx="509.8" cy="176.3" r="0.56" opacity="0.21"></circle><circle cx="513.6" cy="173.3" r="0.38" opacity="0.33"></circle><circle cx="509.7" cy="178.6" r="0.47" opacity="0.28"></circle><circle cx="514.3" cy="176.7" r="0.41" opacity="0.30"></circle><circle cx="506.2" cy="179.5" r="0.68" opacity="0.45"></circle><circle cx="514.2" cy="179.5" r="0.44" opacity="0.49"></circle><circle cx="513.7" cy="172.5" r="0.40" opacity="0.37"></circle><circle cx="507.3" cy="176.8" r="0.48" opacity="0.47"></circle><circle cx="514.7" cy="176.3" r="0.69" opacity="0.30"></circle><circle cx="511.8" cy="174.2" r="0.39" opacity="0.44"></circle><circle cx="511.6" cy="170.9" r="0.62" opacity="0.39"></circle><circle cx="516.0" cy="178.3" r="0.64" opacity="0.38"></circle><circle cx="515.2" cy="174.4" r="0.37" opacity="0.47"></circle><circle cx="508.2" cy="173.4" r="0.63" opacity="0.44"></circle><circle cx="514.9" cy="176.8" r="0.60" opacity="0.37"></circle><path d="M517.8 185.1 L519.2 183.6 L520.8 185.1 L519.2 186.6Z"></path><rect x="521.6" y="167" width="20.2" height="20.3" fill="#fff" stroke="#7a7a7a" stroke-width="0.8"></rect><circle cx="531.0" cy="176.9" r="8.2" fill="url(#gsel)"></circle><path d="M537.7 185.1 L539.2 183.6 L540.7 185.1 L539.2 186.6Z"></path><circle cx="545.9" cy="173.9" r="0.64" opacity="0.90"></circle><circle cx="558.9" cy="174.2" r="0.70" opacity="0.69"></circle><circle cx="551.3" cy="176.8" r="0.75" opacity="0.98"></circle><circle cx="544.0" cy="181.2" r="0.42" opacity="0.70"></circle><circle cx="544.7" cy="173.2" r="0.39" opacity="0.88"></circle><circle cx="545.7" cy="177.2" r="0.57" opacity="0.97"></circle><circle cx="555.8" cy="172.3" r="0.35" opacity="0.64"></circle><circle cx="556.5" cy="180.1" r="0.71" opacity="1.00"></circle><circle cx="553.2" cy="176.7" r="0.67" opacity="0.63"></circle><circle cx="556.0" cy="170.8" r="0.45" opacity="0.79"></circle><circle cx="554.7" cy="182.4" r="0.54" opacity="0.79"></circle><circle cx="550.3" cy="174.8" r="0.43" opacity="0.64"></circle><circle cx="548.0" cy="179.9" r="0.61" opacity="0.80"></circle><circle cx="548.8" cy="183.6" r="0.38" opacity="0.70"></circle><circle cx="548.5" cy="183.3" r="0.42" opacity="0.71"></circle><circle cx="559.6" cy="175.9" r="0.54" opacity="0.75"></circle><circle cx="549.7" cy="180.9" r="0.31" opacity="0.68"></circle><circle cx="554.2" cy="171.2" r="0.30" opacity="0.62"></circle><circle cx="552.3" cy="179.6" r="0.75" opacity="0.73"></circle><circle cx="559.1" cy="178.2" r="0.39" opacity="0.83"></circle><circle cx="558.4" cy="179.1" r="0.58" opacity="0.85"></circle><circle cx="554.0" cy="181.4" r="0.49" opacity="0.78"></circle><circle cx="550.2" cy="181.9" r="0.39" opacity="0.93"></circle><circle cx="557.4" cy="177.2" r="0.73" opacity="0.71"></circle><circle cx="548.3" cy="174.7" r="0.67" opacity="0.64"></circle><circle cx="547.3" cy="176.8" r="0.36" opacity="0.87"></circle><circle cx="548.5" cy="175.8" r="0.54" opacity="0.90"></circle><circle cx="546.4" cy="171.5" r="0.46" opacity="0.91"></circle><circle cx="556.8" cy="174.7" r="0.52" opacity="0.98"></circle><circle cx="544.2" cy="181.9" r="0.48" opacity="0.99"></circle><circle cx="558.0" cy="176.8" r="0.52" opacity="0.77"></circle><circle cx="555.1" cy="184.1" r="0.51" opacity="0.80"></circle><circle cx="554.2" cy="172.5" r="0.71" opacity="0.85"></circle><circle cx="557.4" cy="180.7" r="0.74" opacity="0.70"></circle><path d="M557.6 185.1 L559.1 183.6 L560.6 185.1 L559.1 186.6Z"></path><circle cx="566.6" cy="183.0" r="0.42" opacity="0.94"></circle><circle cx="576.2" cy="179.2" r="0.47" opacity="0.97"></circle><circle cx="571.7" cy="170.6" r="0.49" opacity="0.76"></circle><circle cx="572.9" cy="177.1" r="0.63" opacity="0.69"></circle><circle cx="566.7" cy="180.2" r="0.66" opacity="0.86"></circle><circle cx="573.7" cy="170.3" r="0.49" opacity="0.94"></circle><circle cx="567.6" cy="176.2" r="0.65" opacity="0.69"></circle><circle cx="567.3" cy="172.3" r="0.32" opacity="0.73"></circle><circle cx="564.1" cy="178.0" r="0.44" opacity="0.63"></circle><circle cx="569.2" cy="173.5" r="0.40" opacity="0.89"></circle><circle cx="565.6" cy="175.3" r="0.49" opacity="0.76"></circle><circle cx="571.7" cy="170.7" r="0.60" opacity="0.65"></circle><circle cx="573.4" cy="184.5" r="0.39" opacity="0.68"></circle><circle cx="573.3" cy="181.4" r="0.50" opacity="0.62"></circle><circle cx="573.6" cy="175.8" r="0.35" opacity="0.77"></circle><circle cx="571.5" cy="169.7" r="0.47" opacity="0.70"></circle><circle cx="567.4" cy="178.0" r="0.50" opacity="0.91"></circle><circle cx="568.7" cy="183.5" r="0.68" opacity="0.96"></circle><circle cx="565.4" cy="176.7" r="0.56" opacity="0.81"></circle><circle cx="577.8" cy="174.9" r="0.50" opacity="0.63"></circle><circle cx="567.8" cy="182.7" r="0.38" opacity="0.73"></circle><circle cx="564.9" cy="172.4" r="0.73" opacity="0.82"></circle><circle cx="573.4" cy="185.0" r="0.43" opacity="0.85"></circle><circle cx="571.5" cy="170.2" r="0.35" opacity="0.74"></circle><circle cx="574.2" cy="171.1" r="0.52" opacity="0.87"></circle><circle cx="577.3" cy="175.3" r="0.66" opacity="0.61"></circle><circle cx="575.5" cy="175.5" r="0.38" opacity="0.79"></circle><circle cx="567.6" cy="180.6" r="0.68" opacity="0.60"></circle><circle cx="568.3" cy="182.1" r="0.74" opacity="0.86"></circle><circle cx="574.1" cy="179.8" r="0.65" opacity="0.76"></circle><circle cx="579.5" cy="176.6" r="0.31" opacity="0.70"></circle><circle cx="564.9" cy="181.6" r="0.35" opacity="0.62"></circle><circle cx="570.3" cy="176.1" r="0.38" opacity="0.84"></circle><circle cx="563.9" cy="180.9" r="0.55" opacity="0.88"></circle><path d="M577.6 185.1 L579.1 183.6 L580.6 185.1 L579.1 186.6Z"></path></g></svg>
<div class="a" style="left:480.5px;top:189.7px;width:117.5px;height:10px;background:#222222;border-radius:1.5px;"></div>
<div class="t" style="left: 484px; top: 192.25px; font-size: 6.7px; line-height: 6.7px; color: rgb(218, 218, 218); transform-origin: 0px 50%; transform: scaleX(1.186);">Splatters,</div>
<svg class="a" style="left:588.5px;top:192.5px;" width="7" height="5" viewBox="0 0 7 5"><path d="M0.8 1.2 L3.5 4 L6.2 1.2" fill="none" stroke="#e8e8e8" stroke-width="1.3"></path></svg>
<div class="a" style="left:480.7px;top:202px;width:117px;height:8.6px;background:#2a2a2a;border-radius:1px;box-shadow:0 0 0 0.5px #5a5a5a;"></div>
<div class="a" style="left:480.7px;top:202px;width:7px;height:8.6px;background:#707070;border-radius:1px 0 0 1px;"></div>
<div class="t" style="left: 482px; top: 203.5px; font-size: 6.6px; line-height: 6.6px; color: rgb(244, 244, 244); transform-origin: 0px 50%; transform: scaleX(0.91);">間隔</div>
<div class="t" style="left: 575px; top: 203.5px; font-size: 6.6px; line-height: 6.6px; color: rgb(216, 216, 216); transform-origin: 0px 50%; transform: scaleX(1.129);">15.0</div>
<svg class="a" style="left:591.8px;top:202px;" width="5" height="8.5" viewBox="0 0 5 8.5"><path d="M0.6 3.4 L2.5 1 L4.4 3.4Z M0.6 5.2 L2.5 7.6 L4.4 5.2Z" fill="#d8d8d8"></path></svg>
<svg class="a" style="left:485.3px;top:214.3px;" width="9" height="9" viewBox="0 0 9 9"><g fill="none" stroke="#d2d2d2" stroke-width="1"><path d="M0.8 2 H5 M0.8 4.5 H4 M0.8 7.5 H7.5"></path><path d="M8 1 L4.5 5.5" stroke-width="1.5"></path></g></svg>
<svg class="a" style="left:505.0px;top:214.3px;" width="9" height="9" viewBox="0 0 9 9"><g fill="none" stroke="#d2d2d2" stroke-width="1"><path d="M2 1.5 H5.5 L7.5 3.5 V8.3 H2Z"></path><path d="M1 1 L3 0.3"></path></g></svg>
<svg class="a" style="left:524.2px;top:214.3px;" width="9" height="9" viewBox="0 0 9 9"><g fill="none" stroke="#d2d2d2" stroke-width="1"><rect x="1" y="2" width="4.6" height="3.4"></rect><rect x="3.8" y="4" width="4.6" height="3.4"></rect></g></svg>
<svg class="a" style="left:543.5px;top:214.3px;" width="9" height="9" viewBox="0 0 9 9"><rect x="0.5" y="0.5" width="8" height="8" rx="1" fill="#d2d2d2"></rect><path d="M2.5 2.5 L6.5 6.5 M6.5 2.5 L2.5 6.5" stroke="#454545" stroke-width="1.2"></path></svg>
<svg class="a" style="left:562.5px;top:214.3px;" width="9" height="9" viewBox="0 0 9 9"><g fill="none" stroke="#d2d2d2" stroke-width="1"><path d="M7 3 A3 3 0 1 0 7.3 6" stroke-width="1.2"></path><path d="M5.2 3.4 H8 V0.6Z" fill="#d2d2d2" stroke="none"></path></g></svg>
<svg class="a" style="left:582.3px;top:214.3px;" width="9" height="9" viewBox="0 0 9 9"><g fill="none" stroke="#d2d2d2" stroke-width="1"><path d="M1.5 5 L2.5 1.5 H6.5 L7.5 5Z M1 5.5 H8 V8 H1Z" fill="#d2d2d2" stroke-width="0.5"></path></g></svg>
<svg class="a" style="left:534.5px;top:225.8px;" width="9" height="2" viewBox="0 0 9 2"><circle cx="1" cy="1" r="0.65" fill="#b5b5b5"></circle><circle cx="4.2" cy="1" r="0.65" fill="#b5b5b5"></circle><circle cx="7.4" cy="1" r="0.65" fill="#b5b5b5"></circle></svg>
<div class="a" style="left:480px;top:230.5px;width:33px;height:10.7px;background:#2b2b2b;border-radius:1px;"></div>
<div class="a" style="left:480px;top:230.5px;width:11px;height:10.7px;background:#232323;border-radius:1px;"></div>
<svg class="a" style="left:481.8px;top:232px;" width="8" height="8.5" viewBox="0 0 8 8.5"><path d="M0.5 1.5 H7.5 M0.5 4 H7.5 M0.5 6.5 H7.5" stroke="#f2f2f2" stroke-width="1.3" fill="none"></path></svg>
<svg class="a" style="left:492.5px;top:232px;" width="8.5" height="8.5" viewBox="0 0 8.5 8.5"><rect x="0.5" y="0.5" width="7.5" height="7.5" fill="none" stroke="#e0e0e0" stroke-width="0.8"></rect><path d="M3 0.5 V8 M5.5 0.5 V8" stroke="#e0e0e0" stroke-width="0.8"></path></svg>
<svg class="a" style="left:503.5px;top:232.5px;" width="8.5" height="8" viewBox="0 0 8.5 8"><path d="M0.8 1.2 H7.7" stroke="#e0e0e0" stroke-width="1.1"></path><path d="M1.2 7 C1.8 3 6.7 3 7.3 7" fill="none" stroke="#e0e0e0" stroke-width="1.1"></path><rect x="0.2" y="0.2" width="1.8" height="1.8" fill="#e0e0e0"></rect><rect x="6.5" y="0.2" width="1.8" height="1.8" fill="#e0e0e0"></rect></svg>
<svg class="a" style="left:591px;top:233px;" width="7" height="7" viewBox="0 0 7 7"><rect x="0.4" y="0.4" width="6" height="6" fill="none" stroke="#c8c8c8" stroke-width="0.8"></rect><path d="M4.8 1.6 L2 3.4 L4.8 5.2Z" fill="#c8c8c8"></path></svg>
<div class="a" style="left:480.7px;top:244px;width:90.5px;height:13.3px;background:#2c2c2c;border-radius:1.5px;"></div>
<div class="t" style="left: 485px; top: 248px; font-size: 6.6px; line-height: 6.6px; color: rgb(238, 238, 238); transform-origin: 0px 50%; transform: scaleX(0.961);">モード</div>
<div class="t" style="left: 542px; top: 248px; font-size: 6.6px; line-height: 6.6px; color: rgb(238, 238, 238); transform-origin: 0px 50%; transform: scaleX(0.986);">標準</div>
<svg class="a" style="left:559.5px;top:248.3px;" width="9" height="5" viewBox="0 0 9 5"><path d="M0.8 0.8 L4.5 4.3 L8.2 0.8" fill="none" stroke="#e8e8e8" stroke-width="1.2"></path></svg>
<div class="a" style="left:573px;top:244px;width:24.7px;height:13.3px;background:#2c2c2c;border-radius:1.5px;"></div>
<svg class="a" style="left:576.5px;top:246.8px;" width="8" height="8" viewBox="0 0 8 8"><path d="M6.6 2.6 A3 3 0 1 0 7 5.4" fill="none" stroke="#d8d8d8" stroke-width="1.1"></path><path d="M5 3 H7.8 V0.4Z" fill="#d8d8d8"></path></svg>
<svg class="a" style="left:586.5px;top:248.3px;" width="9" height="5" viewBox="0 0 9 5"><path d="M0.8 0.8 L4.5 4.3 L8.2 0.8" fill="none" stroke="#e8e8e8" stroke-width="1.2"></path></svg>
<div class="a" style="left:481px;top:259px;width:116px;height:9.3px;background:#5c5c5c;border-radius:1px;"></div>
<div class="a" style="left:590.3px;top:259px;width:6.7px;height:9.3px;background:#2d2d2d;border-radius:0 1px 1px 0;"></div>
<div class="t" style="left: 483px; top: 261.1px; font-size: 6.6px; line-height: 6.6px; color: rgb(230, 230, 230); transform-origin: 0px 50%; transform: scaleX(1.005);">不透明度</div>
<div class="t" style="left: 570.5px; top: 261.1px; font-size: 6.6px; line-height: 6.6px; color: rgb(236, 236, 236); transform-origin: 0px 50%; transform: scaleX(1.09);">100.0</div>
<svg class="a" style="left:591.2px;top:259.4px;" width="5" height="8.5" viewBox="0 0 5 8.5"><path d="M0.6 3.4 L2.5 1 L4.4 3.4Z M0.6 5.2 L2.5 7.6 L4.4 5.2Z" fill="#d8d8d8"></path></svg>
<div class="t" style="left: 481px; top: 273.8px; font-size: 6.6px; line-height: 6.6px; color: rgb(232, 232, 232); transform-origin: 0px 50%; transform: scaleX(1.051);">保護:</div>
<svg class="a" style="left:500.8px;top:272.3px;" width="8.5" height="8.5" viewBox="0 0 8.5 8.5"><path d="M7.8 0.6 L3.6 5.2" stroke="#d8d8d8" stroke-width="1.2"></path><path d="M3.4 5 C2.2 5 2 6.4 0.6 7.8 C2.6 8.2 4.2 7.2 4.2 5.8Z" fill="#d8d8d8"></path></svg>
<svg class="a" style="left:514.5px;top:272.2px;" width="9" height="9" viewBox="0 0 9 9"><path d="M4.5 0.8 V8.2 M0.8 4.5 H8.2" stroke="#bdbdbd" stroke-width="1"></path><path d="M3.3 2 L4.5 0.5 L5.7 2 M3.3 7 L4.5 8.5 L5.7 7 M2 3.3 L0.5 4.5 L2 5.7 M7 3.3 L8.5 4.5 L7 5.7" fill="none" stroke="#bdbdbd" stroke-width="0.8"></path></svg>
<svg class="a" style="left:528.3px;top:272.3px;" width="8.8" height="8.8" viewBox="0 0 8.8 8.8"><rect x="0.0" y="0.0" width="2.2" height="2.2" fill="#d0d0d0"></rect><rect x="0.0" y="2.2" width="2.2" height="2.2" fill="#6e6e6e"></rect><rect x="0.0" y="4.4" width="2.2" height="2.2" fill="#d0d0d0"></rect><rect x="0.0" y="6.6000000000000005" width="2.2" height="2.2" fill="#6e6e6e"></rect><rect x="2.2" y="0.0" width="2.2" height="2.2" fill="#6e6e6e"></rect><rect x="2.2" y="2.2" width="2.2" height="2.2" fill="#d0d0d0"></rect><rect x="2.2" y="4.4" width="2.2" height="2.2" fill="#6e6e6e"></rect><rect x="2.2" y="6.6000000000000005" width="2.2" height="2.2" fill="#d0d0d0"></rect><rect x="4.4" y="0.0" width="2.2" height="2.2" fill="#d0d0d0"></rect><rect x="4.4" y="2.2" width="2.2" height="2.2" fill="#6e6e6e"></rect><rect x="4.4" y="4.4" width="2.2" height="2.2" fill="#d0d0d0"></rect><rect x="4.4" y="6.6000000000000005" width="2.2" height="2.2" fill="#6e6e6e"></rect><rect x="6.6000000000000005" y="0.0" width="2.2" height="2.2" fill="#6e6e6e"></rect><rect x="6.6000000000000005" y="2.2" width="2.2" height="2.2" fill="#d0d0d0"></rect><rect x="6.6000000000000005" y="4.4" width="2.2" height="2.2" fill="#6e6e6e"></rect><rect x="6.6000000000000005" y="6.6000000000000005" width="2.2" height="2.2" fill="#d0d0d0"></rect></svg>
<div class="a" style="left:480px;top:282.7px;width:117.3px;height:149.3px;background:#333333;"></div>
<div class="a" style="left:480px;top:282.7px;width:117.3px;height:18.3px;background:#1f1f1f;"></div>
<svg class="a" style="left:484.3px;top:288.7px;" width="11.5" height="9" viewBox="0 0 11.5 9"><path d="M0.6 4.5 C3 0.2 8.5 0.2 10.9 4.5 C8.5 8.8 3 8.8 0.6 4.5Z" fill="none" stroke="#efefef" stroke-width="1.1"></path><circle cx="5.75" cy="4.5" r="1.9" fill="#efefef"></circle></svg>
<div class="a" style="left:525.7px;top:286px;width:21.6px;height:14px;background:#ffffff;"></div>
<div class="t" style="left: 549.3px; top: 290px; font-size: 6.8px; line-height: 6.8px; color: rgb(242, 242, 242); transform-origin: 0px 50%; transform: scaleX(1.03);">背景</div>
<svg class="a" style="left:483.1px;top:436.5px;" width="9" height="9" viewBox="0 0 9 9"><g fill="none" stroke="#d2d2d2" stroke-width="1"><path d="M1.6 1 H5.4 L7.6 3.2 V8.2 H1.6Z" stroke-width="0.9"></path><path d="M5.2 1 V3.4 H7.6" stroke-width="0.7"></path></g></svg>
<svg class="a" style="left:497.5px;top:436.5px;" width="9" height="9" viewBox="0 0 9 9"><g fill="none" stroke="#d2d2d2" stroke-width="1"><path d="M1.2 0.8 H5.2 L7.8 3 V8.2 H1.2Z" fill="#bdbdbd" stroke-width="0.8"></path><path d="M3.8 3.6 V7 M2.4 5.4 H5.4" stroke="#3c3c3c" stroke-width="0.8"></path></g></svg>
<svg class="a" style="left:512.8px;top:436.5px;" width="9" height="9" viewBox="0 0 9 9"><g fill="none" stroke="#d2d2d2" stroke-width="1"><path d="M1.2 6 L4.5 2.8 L7.8 6" stroke-width="1.3"></path></g></svg>
<svg class="a" style="left:527.2px;top:436.5px;" width="9" height="9" viewBox="0 0 9 9"><g fill="none" stroke="#d2d2d2" stroke-width="1"><path d="M1.2 3 L4.5 6.2 L7.8 3" stroke-width="1.3"></path></g></svg>
<svg class="a" style="left:542.2px;top:436.5px;" width="9" height="9" viewBox="0 0 9 9"><g fill="none" stroke="#d2d2d2" stroke-width="1"><rect x="1" y="1" width="4.8" height="4"></rect><rect x="4" y="4" width="4" height="3.6"></rect></g></svg>
<svg class="a" style="left:556.2px;top:436.5px;" width="9" height="9" viewBox="0 0 9 9"><g fill="none" stroke="#d2d2d2" stroke-width="1"><path d="M1 1.2 H4 M1 4.5 H4 M1 7.8 H4" stroke-width="1.2"></path><path d="M6.5 0.8 V8" stroke-width="1.1"></path><path d="M5 6 L6.5 8.4 L8 6Z" fill="#d2d2d2" stroke="none"></path></g></svg>
<svg class="a" style="left:571.2px;top:436.5px;" width="9" height="9" viewBox="0 0 9 9"><g fill="none" stroke="#d2d2d2" stroke-width="1"><rect x="1.5" y="0.8" width="5" height="3.6" fill="#d2d2d2" stroke="none"></rect><path d="M0.8 7 H8.2 M2 5.4 H7" stroke-width="1.2"></path></g></svg>
<svg class="a" style="left:585.5px;top:436.5px;" width="9" height="9" viewBox="0 0 9 9"><rect x="0.5" y="0.5" width="8" height="8" rx="1" fill="#d2d2d2"></rect><path d="M2.5 2.5 L6.5 6.5 M6.5 2.5 L2.5 6.5" stroke="#454545" stroke-width="1.2"></path></svg>
<div class="a" style="left:599px;top:17.5px;width:1px;height:432.5px;background:#7189a6;"></div>
<div class="a" style="left:0px;top:448.6px;width:600px;height:1.4px;background:#30353b;"></div>
</body></html>
